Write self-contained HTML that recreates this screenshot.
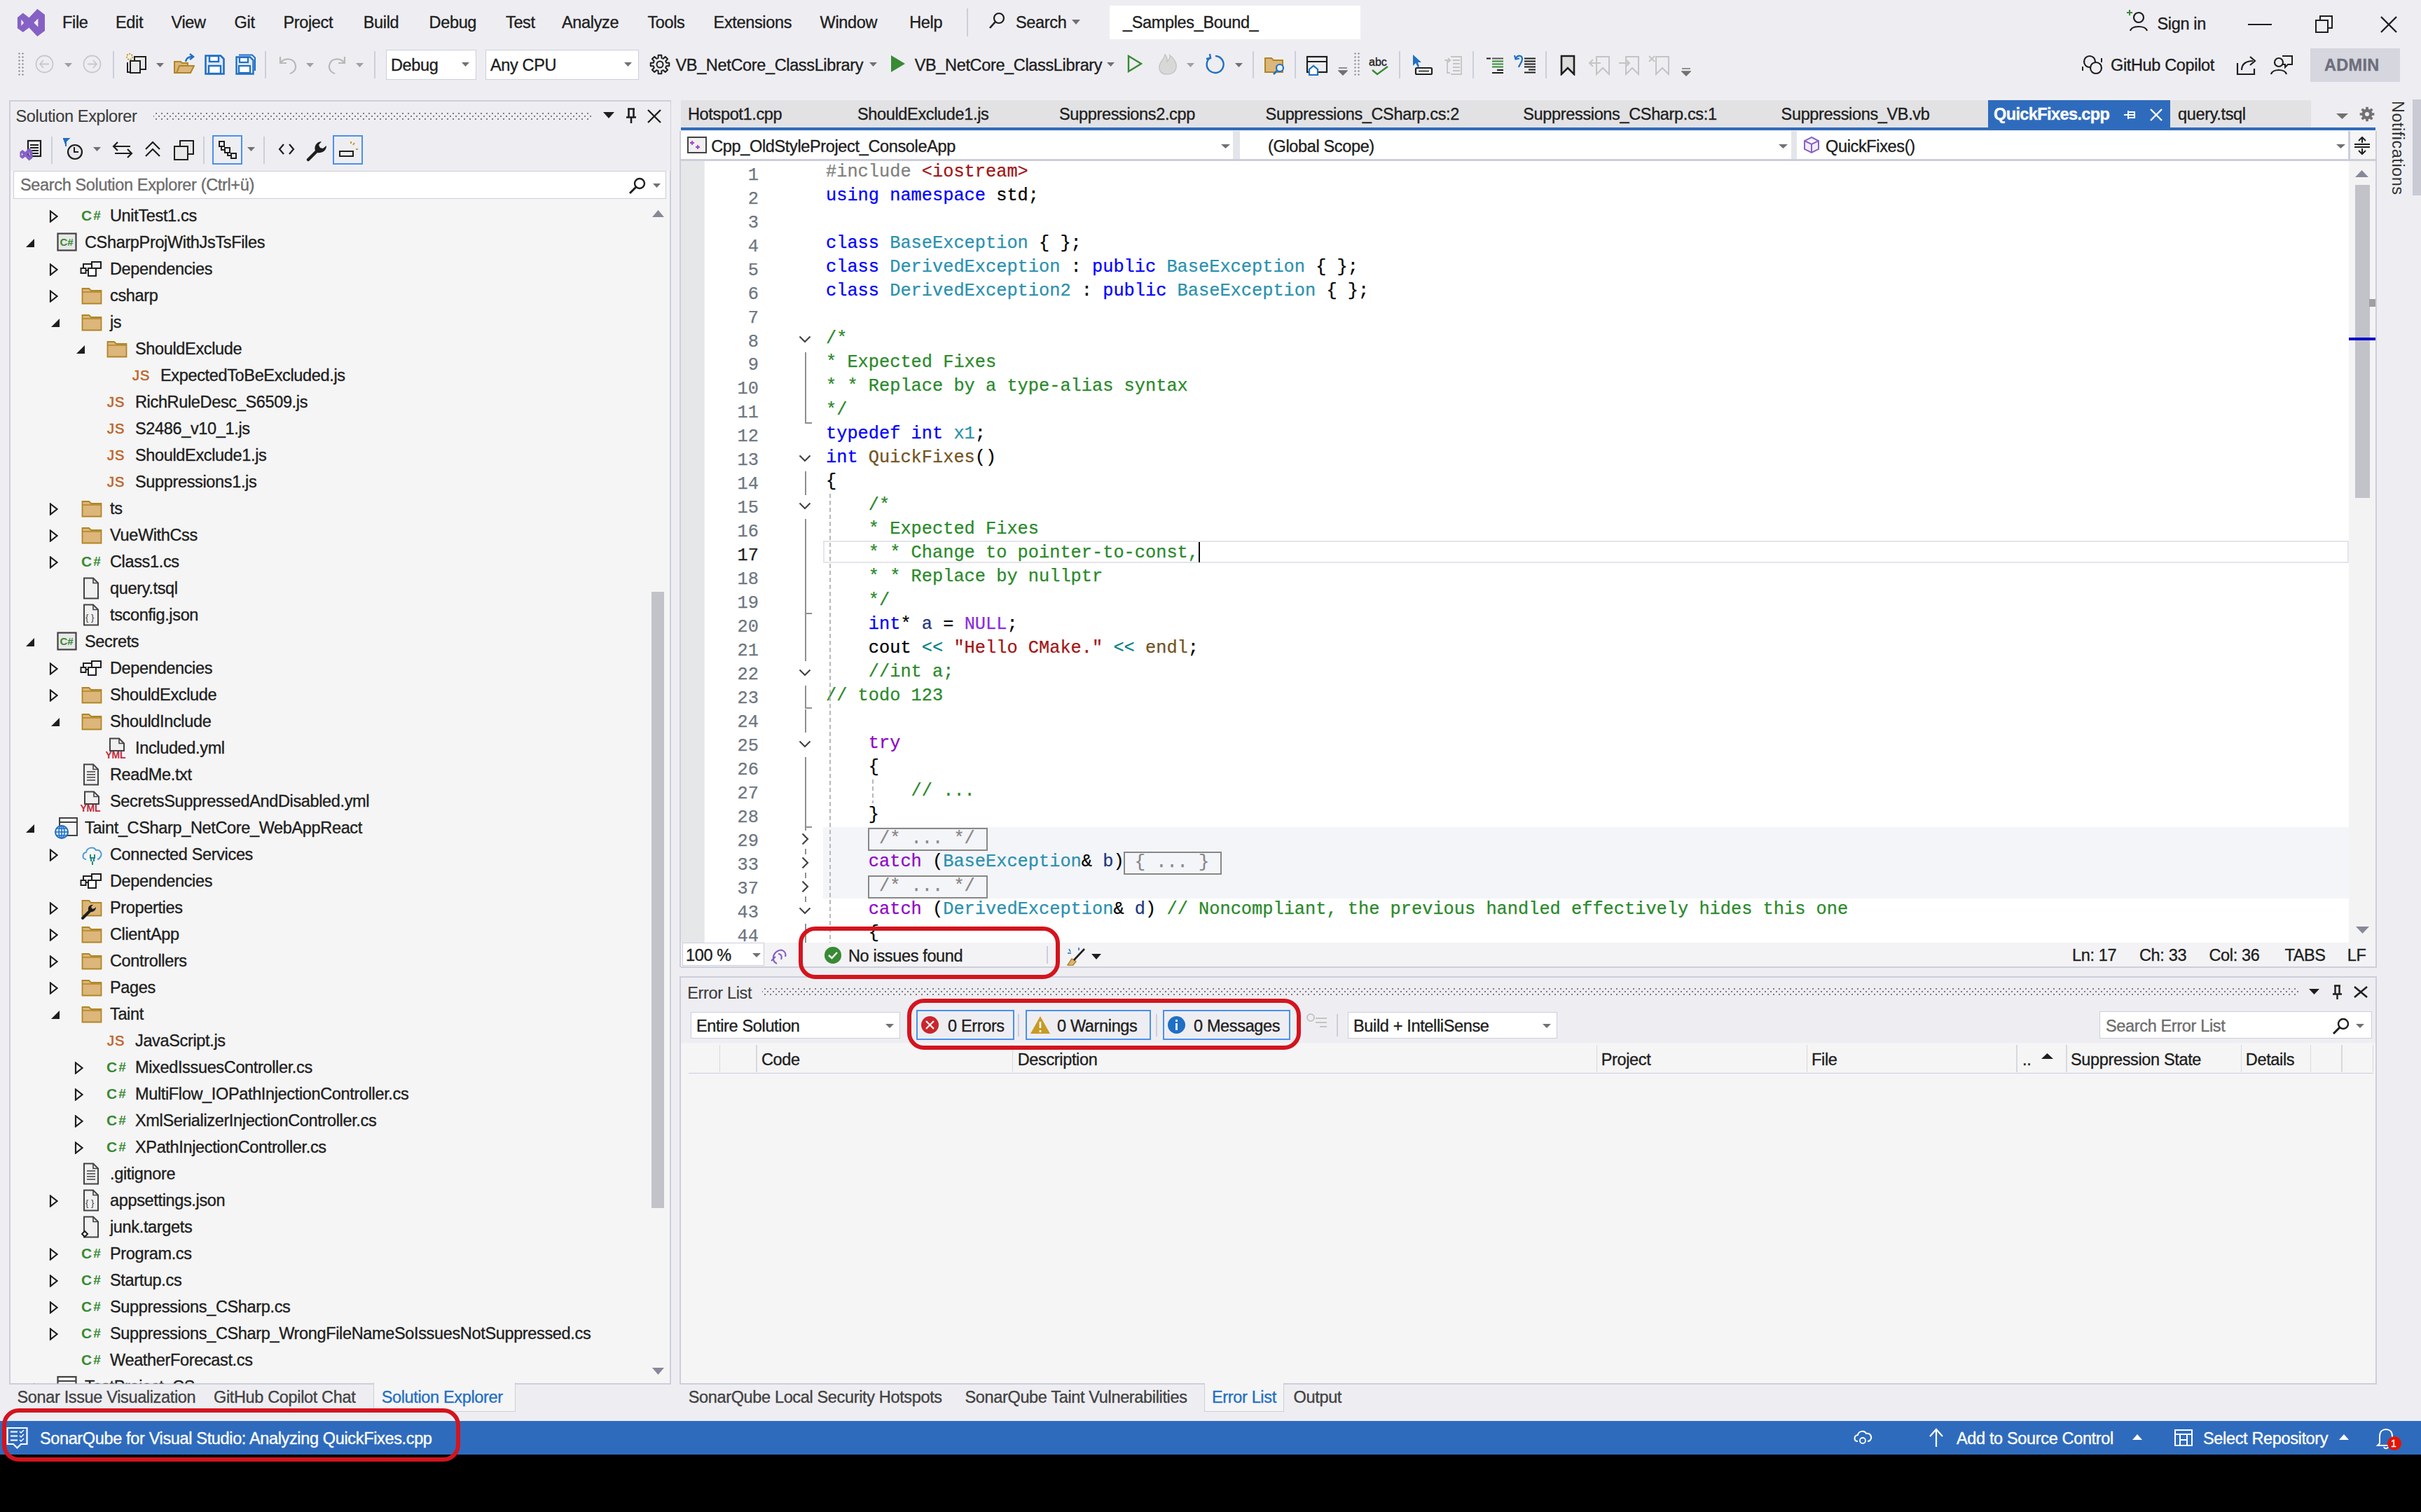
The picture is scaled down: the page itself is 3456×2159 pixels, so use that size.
<!DOCTYPE html><html><head><meta charset="utf-8"><style>
html,body{margin:0;padding:0}
body{width:3456px;height:2159px;overflow:hidden;position:relative;background:#EEEEF2;font-family:"Liberation Sans", sans-serif}
.t{position:absolute;white-space:pre;-webkit-text-stroke-width:0.35px}
.b{position:absolute}
.code{position:absolute;font-family:"Liberation Mono", monospace;font-size:25.33px;line-height:25.33px;white-space:pre;-webkit-text-stroke-width:0.25px}
</style></head><body>
<svg class="b" style="left:24px;top:12px;" width="41" height="41" viewBox="0 0 41 41"><path fill="#8661C5" fill-rule="evenodd" d="M29.3 0.8 L40 9 L40 31.9 L29.3 40.1 L17.5 27.6 L8.8 34 L0.9 28.3 L0.9 12.9 L8.8 6.5 L17.5 13.3 Z M6.3 15.8 L10.2 20.4 L6.3 25.1 Z M30.4 14.4 L24.3 20.6 L30.4 26.5 Z"/></svg>
<div class="t" style="left:89px;top:21.3px;font-size:23.5px;line-height:23.5px;color:#1E1E1E;letter-spacing:-0.35px;font-weight:400;">File</div>
<div class="t" style="left:165px;top:21.3px;font-size:23.5px;line-height:23.5px;color:#1E1E1E;letter-spacing:-0.35px;font-weight:400;">Edit</div>
<div class="t" style="left:244.5px;top:21.3px;font-size:23.5px;line-height:23.5px;color:#1E1E1E;letter-spacing:-0.35px;font-weight:400;">View</div>
<div class="t" style="left:334.6px;top:21.3px;font-size:23.5px;line-height:23.5px;color:#1E1E1E;letter-spacing:-0.35px;font-weight:400;">Git</div>
<div class="t" style="left:404.4px;top:21.3px;font-size:23.5px;line-height:23.5px;color:#1E1E1E;letter-spacing:-0.35px;font-weight:400;">Project</div>
<div class="t" style="left:518.8px;top:21.3px;font-size:23.5px;line-height:23.5px;color:#1E1E1E;letter-spacing:-0.35px;font-weight:400;">Build</div>
<div class="t" style="left:612.6px;top:21.3px;font-size:23.5px;line-height:23.5px;color:#1E1E1E;letter-spacing:-0.35px;font-weight:400;">Debug</div>
<div class="t" style="left:722px;top:21.3px;font-size:23.5px;line-height:23.5px;color:#1E1E1E;letter-spacing:-0.35px;font-weight:400;">Test</div>
<div class="t" style="left:802px;top:21.3px;font-size:23.5px;line-height:23.5px;color:#1E1E1E;letter-spacing:-0.35px;font-weight:400;">Analyze</div>
<div class="t" style="left:924.4px;top:21.3px;font-size:23.5px;line-height:23.5px;color:#1E1E1E;letter-spacing:-0.35px;font-weight:400;">Tools</div>
<div class="t" style="left:1018.6px;top:21.3px;font-size:23.5px;line-height:23.5px;color:#1E1E1E;letter-spacing:-0.35px;font-weight:400;">Extensions</div>
<div class="t" style="left:1170.6px;top:21.3px;font-size:23.5px;line-height:23.5px;color:#1E1E1E;letter-spacing:-0.35px;font-weight:400;">Window</div>
<div class="t" style="left:1298.2px;top:21.3px;font-size:23.5px;line-height:23.5px;color:#1E1E1E;letter-spacing:-0.35px;font-weight:400;">Help</div>
<div class="b" style="left:1380px;top:12px;width:2px;height:40px;background:#CCCEDB;"></div>
<svg class="b" style="left:1411px;top:16px;" width="26" height="28" viewBox="0 0 26 28"><circle cx="15" cy="10" r="7" fill="none" stroke="#1E1E1E" stroke-width="2.2"/><line x1="10" y1="15" x2="2" y2="24" stroke="#1E1E1E" stroke-width="2.6"/></svg>
<div class="t" style="left:1450px;top:21.3px;font-size:23.5px;line-height:23.5px;color:#1E1E1E;letter-spacing:-0.35px;font-weight:400;">Search</div>
<svg class="b" style="left:1530px;top:28px;" width="12" height="8" viewBox="0 0 12 8"><path d="M0 0 H12 L6 7Z" fill="#717171"/></svg>
<div class="b" style="left:1584px;top:8px;width:358px;height:48px;background:#FFFFFF;"></div>
<div class="t" style="left:1603px;top:21.3px;font-size:23.5px;line-height:23.5px;color:#1E1E1E;letter-spacing:-0.35px;font-weight:400;">_Samples_Bound_</div>
<svg class="b" style="left:3036px;top:12px;" width="36" height="36" viewBox="0 0 36 36"><circle cx="17" cy="13" r="7" fill="none" stroke="#1E1E1E" stroke-width="2.2"/><path d="M5 32 C7 24 27 24 29 32" fill="none" stroke="#1E1E1E" stroke-width="2.2"/><path d="M4 2 V10 M0 6 H8" stroke="#388A34" stroke-width="2"/></svg>
<div class="t" style="left:3079.5px;top:23.3px;font-size:23.5px;line-height:23.5px;color:#1E1E1E;letter-spacing:-0.35px;font-weight:400;">Sign in</div>
<div class="b" style="left:3209px;top:34px;width:34px;height:2px;background:#1E1E1E;"></div>
<svg class="b" style="left:3305px;top:22px;" width="26" height="26" viewBox="0 0 26 26"><rect x="1" y="7" width="17" height="17" fill="none" stroke="#1E1E1E" stroke-width="2"/><path d="M7 7 V1 H24 V18 H18" fill="none" stroke="#1E1E1E" stroke-width="2"/></svg>
<svg class="b" style="left:3397px;top:22px;" width="26" height="26" viewBox="0 0 26 26"><path d="M2 2 L24 24 M24 2 L2 24" stroke="#1E1E1E" stroke-width="2.4"/></svg>
<div class="b" style="left:25px;top:74px;width:10px;height:36px;background-image:radial-gradient(circle,#999 1px,transparent 1.3px);background-size:5px 5px"></div>
<svg class="b" style="left:50px;top:78px;" width="27" height="27" viewBox="0 0 27 27"><circle cx="13.5" cy="13.5" r="12" fill="none" stroke="#C8C8C8" stroke-width="1.8"/><path d="M20 13.5 H7 M12 8 L7 13.5 L12 19" fill="none" stroke="#C8C8C8" stroke-width="1.8"/></svg>
<svg class="b" style="left:92px;top:90px;" width="12" height="8" viewBox="0 0 12 8"><path d="M0 0 H11 L5.5 6Z" fill="#A0A0A0"/></svg>
<svg class="b" style="left:118px;top:78px;" width="27" height="27" viewBox="0 0 27 27"><circle cx="13.5" cy="13.5" r="12" fill="none" stroke="#C8C8C8" stroke-width="1.8"/><path d="M7 13.5 H20 M15 8 L20 13.5 L15 19" fill="none" stroke="#C8C8C8" stroke-width="1.8"/></svg>
<div class="b" style="left:161px;top:73px;width:2px;height:39px;background:#CCCEDB;"></div>
<svg class="b" style="left:178px;top:75px;" width="34" height="34" viewBox="0 0 34 34"><rect x="14" y="6" width="16" height="18" fill="#E8E8E8" stroke="#1E1E1E" stroke-width="2"/><rect x="8" y="12" width="14" height="17" fill="#E8E8E8" stroke="#1E1E1E" stroke-width="2"/><path d="M4 14 V28 H8" fill="none" stroke="#1E1E1E" stroke-width="2"/><circle cx="7" cy="6" r="4" fill="none" stroke="#C29A2A" stroke-width="2" stroke-dasharray="2 1.5"/></svg>
<svg class="b" style="left:223px;top:90px;" width="12" height="8" viewBox="0 0 12 8"><path d="M0 0 H11 L5.5 6Z" fill="#717171"/></svg>
<svg class="b" style="left:248px;top:76px;" width="30" height="30" viewBox="0 0 30 30"><path d="M1 12 H10 L12 14 H20 V28 H1Z" fill="#DCB67A" stroke="#B08526" stroke-width="2"/><path d="M4 28 L8 18 H29 L24 28Z" fill="#DCB67A" stroke="#B08526" stroke-width="2"/><path d="M17 12 C18 7 22 5 26 5" fill="none" stroke="#1F6FC5" stroke-width="2.5"/><path d="M23 1 L28 5 L23 9" fill="none" stroke="#1F6FC5" stroke-width="2.5"/></svg>
<svg class="b" style="left:292px;top:78px;" width="29" height="29" viewBox="0 0 29 29"><path d="M1.5 1.5 H23 L27.5 6 V27.5 H1.5Z" fill="#E1EAF4" stroke="#1F6FC5" stroke-width="2.6"/><rect x="7" y="2" width="13" height="8" fill="#fff" stroke="#1F6FC5" stroke-width="2.4"/><rect x="6" y="16" width="17" height="11" fill="#fff" stroke="#1F6FC5" stroke-width="2.4"/></svg>
<svg class="b" style="left:336px;top:77px;" width="29" height="30" viewBox="0 0 29 30"><path d="M1.5 4.5 H21 L25.5 9 V28.5 H1.5Z" fill="#E1EAF4" stroke="#1F6FC5" stroke-width="2.4"/><rect x="6" y="5" width="12" height="7" fill="#fff" stroke="#1F6FC5" stroke-width="2.2"/><rect x="5" y="17" width="16" height="10" fill="#fff" stroke="#1F6FC5" stroke-width="2.2"/><path d="M5 1.5 H24 L28 5.5 V24" fill="none" stroke="#1F6FC5" stroke-width="2"/></svg>
<div class="b" style="left:378px;top:73px;width:2px;height:39px;background:#CCCEDB;"></div>
<svg class="b" style="left:396px;top:78px;" width="30" height="28" viewBox="0 0 30 28"><path d="M4 3 V12 H13" fill="none" stroke="#B8B8B8" stroke-width="2.2"/><path d="M4 12 C10 4 24 4 26 16 C27 22 22 26 18 27" fill="none" stroke="#B8B8B8" stroke-width="2.2"/></svg>
<svg class="b" style="left:437px;top:90px;" width="12" height="8" viewBox="0 0 12 8"><path d="M0 0 H11 L5.5 6Z" fill="#A0A0A0"/></svg>
<svg class="b" style="left:466px;top:78px;" width="30" height="28" viewBox="0 0 30 28"><path d="M26 3 V12 H17" fill="none" stroke="#B8B8B8" stroke-width="2.2"/><path d="M26 12 C20 4 6 4 4 16 C3 22 8 26 12 27" fill="none" stroke="#B8B8B8" stroke-width="2.2"/></svg>
<svg class="b" style="left:508px;top:90px;" width="12" height="8" viewBox="0 0 12 8"><path d="M0 0 H11 L5.5 6Z" fill="#A0A0A0"/></svg>
<div class="b" style="left:534px;top:73px;width:2px;height:39px;background:#CCCEDB;"></div>
<div class="b" style="left:551px;top:71px;width:129px;height:43px;background:#FFFFFF;border:1.5px solid #CCCEDB;box-sizing:border-box;"></div>
<div class="t" style="left:558px;top:82.3px;font-size:23.5px;line-height:23.5px;color:#1E1E1E;letter-spacing:-0.35px;font-weight:400;">Debug</div>
<svg class="b" style="left:659px;top:89px;" width="12" height="8" viewBox="0 0 12 8"><path d="M0 0 H11 L5.5 6Z" fill="#717171"/></svg>
<div class="b" style="left:693px;top:71px;width:219px;height:43px;background:#FFFFFF;border:1.5px solid #CCCEDB;box-sizing:border-box;"></div>
<div class="t" style="left:700px;top:82.3px;font-size:23.5px;line-height:23.5px;color:#1E1E1E;letter-spacing:-0.35px;font-weight:400;">Any CPU</div>
<svg class="b" style="left:891px;top:89px;" width="12" height="8" viewBox="0 0 12 8"><path d="M0 0 H11 L5.5 6Z" fill="#717171"/></svg>
<svg class="b" style="left:927px;top:77px;" width="30" height="30" viewBox="0 0 30 30"><path d="M24.20 12.63 L28.29 12.63 L28.29 17.37 L24.20 17.37 L23.18 19.83 L26.08 22.72 L22.72 26.08 L19.83 23.18 L17.37 24.20 L17.37 28.29 L12.63 28.29 L12.63 24.20 L10.17 23.18 L7.28 26.08 L3.92 22.72 L6.82 19.83 L5.80 17.37 L1.71 17.37 L1.71 12.63 L5.80 12.63 L6.82 10.17 L3.92 7.28 L7.28 3.92 L10.17 6.82 L12.63 5.80 L12.63 1.71 L17.37 1.71 L17.37 5.80 L19.83 6.82 L22.72 3.92 L26.08 7.28 L23.18 10.17Z" fill="none" stroke="#1E1E1E" stroke-width="2" stroke-linejoin="round"/><circle cx="15" cy="15" r="4.5" fill="none" stroke="#1E1E1E" stroke-width="2"/></svg>
<div class="t" style="left:964.5px;top:82.3px;font-size:23.5px;line-height:23.5px;color:#1E1E1E;letter-spacing:-0.35px;font-weight:400;">VB_NetCore_ClassLibrary</div>
<svg class="b" style="left:1241px;top:89px;" width="12" height="8" viewBox="0 0 12 8"><path d="M0 0 H11 L5.5 6Z" fill="#717171"/></svg>
<svg class="b" style="left:1271px;top:78px;" width="22" height="26" viewBox="0 0 22 26"><path d="M1 1 L21 13 L1 25Z" fill="#388A34"/></svg>
<div class="t" style="left:1305.7px;top:82.3px;font-size:23.5px;line-height:23.5px;color:#1E1E1E;letter-spacing:-0.35px;font-weight:400;">VB_NetCore_ClassLibrary</div>
<svg class="b" style="left:1580px;top:89px;" width="12" height="8" viewBox="0 0 12 8"><path d="M0 0 H11 L5.5 6Z" fill="#717171"/></svg>
<svg class="b" style="left:1609px;top:78px;" width="22" height="26" viewBox="0 0 22 26"><path d="M2 2 L20 13 L2 24Z" fill="none" stroke="#388A34" stroke-width="2.4"/></svg>
<svg class="b" style="left:1652px;top:76px;" width="30" height="31" viewBox="0 0 30 31"><path d="M13 30 C4 30 1 22 4 15 C6 10 10 8 11 2 C15 6 14 10 14 12 C17 9 19 6 18 3 C26 9 29 17 26 24 C24 28 19 30 13 30Z" fill="#D8D8D8" stroke="#C4C4C4" stroke-width="1.5"/></svg>
<svg class="b" style="left:1694px;top:90px;" width="12" height="8" viewBox="0 0 12 8"><path d="M0 0 H11 L5.5 6Z" fill="#A0A0A0"/></svg>
<svg class="b" style="left:1719px;top:76px;" width="32" height="32" viewBox="0 0 32 32"><path d="M9 6 A12 12 0 1 0 16 4" fill="none" stroke="#1F6FC5" stroke-width="2.4"/><path d="M8 1 L9 7 L3 8" fill="none" stroke="#1F6FC5" stroke-width="2.4"/></svg>
<svg class="b" style="left:1763px;top:90px;" width="12" height="8" viewBox="0 0 12 8"><path d="M0 0 H11 L5.5 6Z" fill="#717171"/></svg>
<div class="b" style="left:1788px;top:73px;width:2px;height:39px;background:#CCCEDB;"></div>
<svg class="b" style="left:1805px;top:79px;" width="32" height="28" viewBox="0 0 32 28"><path d="M1 4 H10 L13 7 H26 V24 H1Z" fill="#DCB67A" stroke="#B08526" stroke-width="2"/><circle cx="22" cy="18" r="5" fill="#E8EEF5" stroke="#1F6FC5" stroke-width="2.2"/><path d="M18 22 L13 27" stroke="#1F6FC5" stroke-width="2.6"/></svg>
<div class="b" style="left:1848px;top:73px;width:2px;height:39px;background:#CCCEDB;"></div>
<svg class="b" style="left:1864px;top:79px;" width="32" height="30" viewBox="0 0 32 30"><rect x="2" y="2" width="28" height="22" fill="none" stroke="#1E1E1E" stroke-width="2.2"/><path d="M2 9 H30" stroke="#1E1E1E" stroke-width="2"/><path d="M5 28 V20 L11 15 L17 20 V28Z" fill="#fff" stroke="#1F6FC5" stroke-width="2.2"/></svg>
<svg class="b" style="left:1910px;top:95px;" width="14" height="14" viewBox="0 0 14 14"><path d="M1 2 H13 M1 6 L7 12 L13 6Z" fill="#717171" stroke="#717171" stroke-width="1.5"/></svg>
<div class="b" style="left:1932px;top:74px;width:10px;height:36px;background-image:radial-gradient(circle,#999 1px,transparent 1.3px);background-size:5px 5px"></div>
<div class="t" style="left:1954px;top:80.7px;font-size:16px;line-height:16px;color:#1E1E1E;letter-spacing:0px;font-weight:400;">abc</div>
<svg class="b" style="left:1957px;top:94px;" width="26" height="14" viewBox="0 0 26 14"><path d="M2 6 L9 12 L24 1" fill="none" stroke="#388A34" stroke-width="2.4"/></svg>
<div class="b" style="left:1997px;top:73px;width:2px;height:39px;background:#CCCEDB;"></div>
<svg class="b" style="left:2014px;top:76px;" width="32" height="32" viewBox="0 0 32 32"><path d="M3 2 L3 18 L7 14 L10 20 L12 19 L10 13 L15 13Z" fill="#1F6FC5"/><rect x="7" y="21" width="23" height="9" rx="1.5" fill="#fff" stroke="#1E1E1E" stroke-width="2.2"/><path d="M11 25.5 H26" stroke="#1E1E1E" stroke-width="1.6"/></svg>
<svg class="b" style="left:2058px;top:78px;" width="30" height="30" viewBox="0 0 30 30"><path d="M13 3 H28 V28 H13 M16 8 H26 M16 13 H26 M16 18 H26 M16 23 H26 M8 8 V26 H12 M4 8 H12 L9 5 M12 8 L9 11" fill="none" stroke="#C4C4C4" stroke-width="1.8"/></svg>
<div class="b" style="left:2102px;top:73px;width:2px;height:39px;background:#CCCEDB;"></div>
<svg class="b" style="left:2122px;top:79px;" width="26" height="28" viewBox="0 0 26 28"><path d="M0 4.5 H6 M15 21 H24 M8 25 H24" stroke="#1E1E1E" stroke-width="2"/><path d="M8 8.5 H24 M8 12.5 H24 M8 16.5 H24" stroke="#388A34" stroke-width="2"/><path d="M8 4.5 H24" stroke="#555" stroke-width="2"/></svg>
<svg class="b" style="left:2161px;top:77px;" width="32" height="30" viewBox="0 0 32 30"><path d="M15 6.5 H31 M15 10.5 H31 M15 14.5 H31 M15 18.5 H31 M21 22.5 H31 M15 26.5 H31" stroke="#1E1E1E" stroke-width="2"/><path d="M3 6 C6 1 12 2 12 7 C12 12 8 15 7 19" fill="none" stroke="#1F6FC5" stroke-width="2.2"/><path d="M1 2 L2.5 7.5 L8 6.5" fill="none" stroke="#1F6FC5" stroke-width="2.2"/></svg>
<div class="b" style="left:2206px;top:73px;width:2px;height:39px;background:#CCCEDB;"></div>
<svg class="b" style="left:2227px;top:78px;" width="22" height="30" viewBox="0 0 22 30"><path d="M2 2 H20 V28 L11 19 L2 28Z" fill="#DCDCDC" stroke="#1E1E1E" stroke-width="2.6"/></svg>
<svg class="b" style="left:2267px;top:78px;" width="34" height="30" viewBox="0 0 34 30"><path d="M12 3 H30 V28 L21 19 L12 28 Z M2 12 H18 M7 7 L2 12 L7 17" fill="none" stroke="#C4C4C4" stroke-width="2"/></svg>
<svg class="b" style="left:2309px;top:78px;" width="34" height="30" viewBox="0 0 34 30"><path d="M12 3 H30 V28 L21 19 L12 28 Z M2 12 H17 M13 8 L17 12 L13 16" fill="none" stroke="#C4C4C4" stroke-width="2"/></svg>
<svg class="b" style="left:2352px;top:78px;" width="34" height="30" viewBox="0 0 34 30"><path d="M12 3 H30 V28 L21 19 L12 28 Z M2 2 L10 10 M10 2 L2 10" fill="none" stroke="#C4C4C4" stroke-width="2"/></svg>
<svg class="b" style="left:2400px;top:96px;" width="14" height="14" viewBox="0 0 14 14"><path d="M1 2 H13 M1 6 L7 12 L13 6Z" fill="#717171" stroke="#717171" stroke-width="1.5"/></svg>
<svg class="b" style="left:2970px;top:77px;" width="34" height="32" viewBox="0 0 34 32"><circle cx="13" cy="11" r="8" fill="none" stroke="#1E1E1E" stroke-width="2.2"/><circle cx="22" cy="20" r="8" fill="#EEEEF2" stroke="#1E1E1E" stroke-width="2.2"/><path d="M3 24 V18 M30 12 V6" stroke="#1E1E1E" stroke-width="2"/></svg>
<div class="t" style="left:3013px;top:82.3px;font-size:23.5px;line-height:23.5px;color:#1E1E1E;letter-spacing:-0.35px;font-weight:400;">GitHub Copilot</div>
<svg class="b" style="left:3192px;top:78px;" width="32" height="30" viewBox="0 0 32 30"><path d="M2 12 V28 H26 V20" fill="none" stroke="#1E1E1E" stroke-width="2.2"/><path d="M8 22 C8 12 16 9 24 9 M20 3 L27 9 L20 15" fill="none" stroke="#1E1E1E" stroke-width="2.2"/></svg>
<svg class="b" style="left:3240px;top:78px;" width="34" height="30" viewBox="0 0 34 30"><circle cx="13" cy="11" r="6" fill="none" stroke="#1E1E1E" stroke-width="2.2"/><path d="M2 28 C4 20 22 20 24 28" fill="none" stroke="#1E1E1E" stroke-width="2.2"/><path d="M18 2 H32 V14 H26 L22 18 V14 H18" fill="none" stroke="#1E1E1E" stroke-width="2"/></svg>
<div class="b" style="left:3298px;top:69px;width:128px;height:48px;background:#D5D6DE;"></div>
<div class="t" style="left:3318px;top:82.3px;font-size:23.5px;line-height:23.5px;color:#6D6E7C;letter-spacing:0.3px;font-weight:700;">ADMIN</div>
<div class="b" style="left:12.5px;top:143px;width:945.8px;height:1833.6px;background:#F5F5F5;border:2px solid #CCCEDB;box-sizing:border-box;"></div>
<div class="b" style="left:14.5px;top:144.5px;width:942.0px;height:99.5px;background:#EEEEF2;"></div>
<div class="t" style="left:22.5px;top:155.3px;font-size:23.5px;line-height:23.5px;color:#3C3C3C;letter-spacing:-0.35px;font-weight:400;-webkit-text-stroke-width:0.15px;">Solution Explorer</div>
<div class="b" style="left:219px;top:159.5px;width:626px;height:12px;background-image:radial-gradient(circle,#7A7A80 0.9px,transparent 1.3px),radial-gradient(circle,#7A7A80 0.9px,transparent 1.3px);background-size:8px 8px,8px 8px;background-position:0 -2px,4px 2px"></div>
<svg class="b" style="left:861px;top:160px;" width="16" height="10" viewBox="0 0 16 10"><path d="M0 0 H16 L8 9Z" fill="#1E1E1E"/></svg>
<svg class="b" style="left:893px;top:154px;" width="16" height="23" viewBox="0 0 16 23"><path d="M3 1.5 H13 M4.5 1.5 V13 M11.5 1.5 V13 M1 13.5 H15 M8 13.5 V22" fill="none" stroke="#1E1E1E" stroke-width="2.6"/></svg>
<svg class="b" style="left:923px;top:155px;" width="22" height="22" viewBox="0 0 22 22"><path d="M2 2 L20 20 M20 2 L2 20" stroke="#1E1E1E" stroke-width="2.4"/></svg>
<svg class="b" style="left:28px;top:199px;" width="32" height="32" viewBox="0 0 32 32"><rect x="12" y="2" width="18" height="22" fill="none" stroke="#1E1E1E" stroke-width="2.2"/><path d="M15 8 H27 M15 12 H27 M15 16 H27 M15 20 H27" stroke="#1E1E1E" stroke-width="2"/><path transform="translate(0,12) scale(0.46)" fill="#8661C5" fill-rule="evenodd" d="M29.3 0.8 L40 9 L40 31.9 L29.3 40.1 L17.5 27.6 L8.8 34 L0.9 28.3 L0.9 12.9 L8.8 6.5 L17.5 13.3 Z M6.3 15.8 L10.2 20.4 L6.3 25.1 Z M30.4 14.4 L24.3 20.6 L30.4 26.5 Z"/></svg>
<div class="b" style="left:72.5px;top:195px;width:2.0px;height:39px;background:#CCCEDB;"></div>
<svg class="b" style="left:89px;top:197px;" width="34" height="34" viewBox="0 0 34 34"><path d="M1 1 H9 L5 5 V12" fill="#1F6FC5" stroke="#1F6FC5" stroke-width="2"/><circle cx="18" cy="20" r="10" fill="#E8E8E8" stroke="#1E1E1E" stroke-width="2.2"/><path d="M17 13 V20 H23" fill="none" stroke="#1E1E1E" stroke-width="2"/></svg>
<svg class="b" style="left:133px;top:210px;" width="12" height="8" viewBox="0 0 12 8"><path d="M0 0 H11 L5.5 6Z" fill="#717171"/></svg>
<svg class="b" style="left:160px;top:201px;" width="30" height="26" viewBox="0 0 30 26"><path d="M2 8 H26 M8 2 L2 8 L8 14 M28 18 H4 M22 12 L28 18 L22 24" fill="none" stroke="#1E1E1E" stroke-width="2.2"/></svg>
<svg class="b" style="left:205px;top:199px;" width="26" height="28" viewBox="0 0 26 28"><path d="M3 14 L13 4 L23 14 M3 24 L13 14 L23 24" fill="none" stroke="#1E1E1E" stroke-width="2.2"/></svg>
<svg class="b" style="left:247px;top:199px;" width="32" height="32" viewBox="0 0 32 32"><rect x="10" y="2" width="19" height="19" fill="#E8E8E8" stroke="#1E1E1E" stroke-width="2"/><rect x="2" y="10" width="19" height="19" fill="#E8E8E8" stroke="#1E1E1E" stroke-width="2"/></svg>
<div class="b" style="left:290px;top:195px;width:2px;height:39px;background:#CCCEDB;"></div>
<div class="b" style="left:302.8px;top:193px;width:43.19999999999999px;height:42.400000000000006px;background:none;border:2px solid #4A90F0;box-sizing:border-box;"></div>
<svg class="b" style="left:311px;top:200px;" width="28" height="28" viewBox="0 0 28 28"><rect x="2" y="2" width="7" height="7" fill="none" stroke="#1E1E1E" stroke-width="2"/><rect x="10" y="11" width="7" height="7" fill="none" stroke="#1E1E1E" stroke-width="2"/><rect x="19" y="19" width="7" height="7" fill="none" stroke="#1E1E1E" stroke-width="2"/><path d="M5 9 V14 H10 M14 18 V22 H19" fill="none" stroke="#1E1E1E" stroke-width="2"/></svg>
<svg class="b" style="left:353px;top:210px;" width="12" height="8" viewBox="0 0 12 8"><path d="M0 0 H11 L5.5 6Z" fill="#717171"/></svg>
<div class="b" style="left:376px;top:195px;width:2px;height:39px;background:#CCCEDB;"></div>
<svg class="b" style="left:397px;top:204px;" width="24" height="18" viewBox="0 0 24 18"><path d="M8 2 L2 9 L8 16 M16 2 L22 9 L16 16" fill="none" stroke="#1E1E1E" stroke-width="2.2"/></svg>
<svg class="b" style="left:437px;top:199px;" width="32" height="32" viewBox="0 0 32 32"><path d="M3 29 L15 17" stroke="#1E1E1E" stroke-width="4.5" stroke-linecap="round"/><path d="M14 18 C10 12 14 3 22 3 L18 8 L20 12 L24 13 L29 9 C29 17 22 20 16 19Z" fill="#1E1E1E"/></svg>
<div class="b" style="left:475px;top:193px;width:42.60000000000002px;height:42.400000000000006px;background:none;border:2px solid #4A90F0;box-sizing:border-box;"></div>
<svg class="b" style="left:482px;top:201px;" width="30" height="26" viewBox="0 0 30 26"><path d="M3 15 V22 H22 V15 Z" fill="none" stroke="#1E1E1E" stroke-width="2"/><path d="M3 15 H17" stroke="#1E1E1E" stroke-width="2"/><path d="M22 6 L24 3 M26 12 H29 M19 4 L19 1" stroke="#C29A2A" stroke-width="2"/></svg>
<div class="b" style="left:19.4px;top:243.7px;width:931.6px;height:40.30000000000001px;background:#FFFFFF;border:1.5px solid #CCCEDB;box-sizing:border-box;"></div>
<div class="t" style="left:29px;top:253.3px;font-size:23.5px;line-height:23.5px;color:#6D6D6D;letter-spacing:-0.35px;font-weight:400;">Search Solution Explorer (Ctrl+ü)</div>
<svg class="b" style="left:897px;top:252px;" width="26" height="26" viewBox="0 0 26 26"><circle cx="16" cy="10" r="7" fill="none" stroke="#1E1E1E" stroke-width="2.4"/><path d="M11 15 L2 24" stroke="#1E1E1E" stroke-width="3"/></svg>
<svg class="b" style="left:932px;top:262px;" width="12" height="8" viewBox="0 0 12 8"><path d="M0 0 H11 L5.5 6Z" fill="#717171"/></svg>
<div class="b" style="left:0;top:0;width:3456px;height:2159px;clip-path:polygon(14.5px 284px,930px 284px,930px 1975.5px,14.5px 1975.5px)">
<svg class="b" style="left:70.4px;top:300px;" width="14" height="18" viewBox="0 0 14 18"><path d="M2 1.5 L11.5 9 L2 16.5Z" fill="none" stroke="#1E1E1E" stroke-width="2.2"/></svg>
<div class="t" style="left:116px;top:297px;font-size:21px;line-height:22px;color:#388A34;font-weight:700;letter-spacing:0px;-webkit-text-stroke-width:0">C<span style="font-size:19px;position:relative;top:-1px;margin-left:2px">#</span></div>
<div class="t" style="left:157px;top:297.3px;font-size:23.5px;line-height:23.5px;color:#1E1E1E;letter-spacing:-0.35px;font-weight:400;">UnitTest1.cs</div>
<svg class="b" style="left:35.5px;top:340px;" width="14" height="14" viewBox="0 0 14 14"><path d="M13 1 V13 H1Z" fill="#1E1E1E"/></svg>
<svg class="b" style="left:80.5px;top:332px;" width="30" height="28" viewBox="0 0 30 28"><rect x="1.5" y="1.5" width="26" height="24" fill="#E8E8E8" stroke="#424242" stroke-width="2.2"/></svg>
<div class="t" style="left:85.5px;top:337px;font-size:15px;line-height:18px;color:#388A34;letter-spacing:0px;font-weight:700;-webkit-text-stroke-width:0">C#</div>
<div class="t" style="left:121px;top:335.3px;font-size:23.5px;line-height:23.5px;color:#1E1E1E;letter-spacing:-0.35px;font-weight:400;">CSharpProjWithJsTsFiles</div>
<svg class="b" style="left:70.4px;top:376px;" width="14" height="18" viewBox="0 0 14 18"><path d="M2 1.5 L11.5 9 L2 16.5Z" fill="none" stroke="#1E1E1E" stroke-width="2.2"/></svg>
<svg class="b" style="left:114px;top:372px;" width="34" height="24" viewBox="0 0 34 24"><rect x="1.5" y="11" width="7" height="7" fill="none" stroke="#1E1E1E" stroke-width="2"/><rect x="17" y="2" width="13" height="9" fill="none" stroke="#1E1E1E" stroke-width="2"/><rect x="12" y="11" width="11" height="11" fill="#fff" stroke="#1E1E1E" stroke-width="2"/><path d="M8 14 H12 M5 11 V5 H17" fill="none" stroke="#1E1E1E" stroke-width="2"/></svg>
<div class="t" style="left:157px;top:373.3px;font-size:23.5px;line-height:23.5px;color:#1E1E1E;letter-spacing:-0.35px;font-weight:400;">Dependencies</div>
<svg class="b" style="left:70.4px;top:414px;" width="14" height="18" viewBox="0 0 14 18"><path d="M2 1.5 L11.5 9 L2 16.5Z" fill="none" stroke="#1E1E1E" stroke-width="2.2"/></svg>
<svg class="b" style="left:116px;top:409px;" width="30" height="26" viewBox="0 0 30 26"><path d="M1.5 3 H11 L14 6 H28.5 V24.5 H1.5Z" fill="#DCB67A" stroke="#B08526" stroke-width="1.8"/><path d="M1.5 8 H28.5" stroke="#B08526" stroke-width="1.5"/></svg>
<div class="t" style="left:157px;top:411.3px;font-size:23.5px;line-height:23.5px;color:#1E1E1E;letter-spacing:-0.35px;font-weight:400;">csharp</div>
<svg class="b" style="left:71.5px;top:454px;" width="14" height="14" viewBox="0 0 14 14"><path d="M13 1 V13 H1Z" fill="#1E1E1E"/></svg>
<svg class="b" style="left:116px;top:447px;" width="30" height="26" viewBox="0 0 30 26"><path d="M1.5 3 H11 L14 6 H28.5 V24.5 H1.5Z" fill="#DCB67A" stroke="#B08526" stroke-width="1.8"/><path d="M1.5 8 H28.5" stroke="#B08526" stroke-width="1.5"/></svg>
<div class="t" style="left:157px;top:449.3px;font-size:23.5px;line-height:23.5px;color:#1E1E1E;letter-spacing:-0.35px;font-weight:400;">js</div>
<svg class="b" style="left:107.5px;top:492px;" width="14" height="14" viewBox="0 0 14 14"><path d="M13 1 V13 H1Z" fill="#1E1E1E"/></svg>
<svg class="b" style="left:152px;top:485px;" width="30" height="26" viewBox="0 0 30 26"><path d="M1.5 3 H11 L14 6 H28.5 V24.5 H1.5Z" fill="#DCB67A" stroke="#B08526" stroke-width="1.8"/><path d="M1.5 8 H28.5" stroke="#B08526" stroke-width="1.5"/></svg>
<div class="t" style="left:193px;top:487.3px;font-size:23.5px;line-height:23.5px;color:#1E1E1E;letter-spacing:-0.35px;font-weight:400;">ShouldExclude</div>
<div class="t" style="left:189px;top:526px;font-size:20px;line-height:20px;color:#C0652B;font-weight:400;letter-spacing:1px;-webkit-text-stroke-width:0.6px">JS</div>
<div class="t" style="left:229px;top:525.3px;font-size:23.5px;line-height:23.5px;color:#1E1E1E;letter-spacing:-0.35px;font-weight:400;">ExpectedToBeExcluded.js</div>
<div class="t" style="left:153px;top:564px;font-size:20px;line-height:20px;color:#C0652B;font-weight:400;letter-spacing:1px;-webkit-text-stroke-width:0.6px">JS</div>
<div class="t" style="left:193px;top:563.3px;font-size:23.5px;line-height:23.5px;color:#1E1E1E;letter-spacing:-0.35px;font-weight:400;">RichRuleDesc_S6509.js</div>
<div class="t" style="left:153px;top:602px;font-size:20px;line-height:20px;color:#C0652B;font-weight:400;letter-spacing:1px;-webkit-text-stroke-width:0.6px">JS</div>
<div class="t" style="left:193px;top:601.3px;font-size:23.5px;line-height:23.5px;color:#1E1E1E;letter-spacing:-0.35px;font-weight:400;">S2486_v10_1.js</div>
<div class="t" style="left:153px;top:640px;font-size:20px;line-height:20px;color:#C0652B;font-weight:400;letter-spacing:1px;-webkit-text-stroke-width:0.6px">JS</div>
<div class="t" style="left:193px;top:639.3px;font-size:23.5px;line-height:23.5px;color:#1E1E1E;letter-spacing:-0.35px;font-weight:400;">ShouldExclude1.js</div>
<div class="t" style="left:153px;top:678px;font-size:20px;line-height:20px;color:#C0652B;font-weight:400;letter-spacing:1px;-webkit-text-stroke-width:0.6px">JS</div>
<div class="t" style="left:193px;top:677.3px;font-size:23.5px;line-height:23.5px;color:#1E1E1E;letter-spacing:-0.35px;font-weight:400;">Suppressions1.js</div>
<svg class="b" style="left:70.4px;top:718px;" width="14" height="18" viewBox="0 0 14 18"><path d="M2 1.5 L11.5 9 L2 16.5Z" fill="none" stroke="#1E1E1E" stroke-width="2.2"/></svg>
<svg class="b" style="left:116px;top:713px;" width="30" height="26" viewBox="0 0 30 26"><path d="M1.5 3 H11 L14 6 H28.5 V24.5 H1.5Z" fill="#DCB67A" stroke="#B08526" stroke-width="1.8"/><path d="M1.5 8 H28.5" stroke="#B08526" stroke-width="1.5"/></svg>
<div class="t" style="left:157px;top:715.3px;font-size:23.5px;line-height:23.5px;color:#1E1E1E;letter-spacing:-0.35px;font-weight:400;">ts</div>
<svg class="b" style="left:70.4px;top:756px;" width="14" height="18" viewBox="0 0 14 18"><path d="M2 1.5 L11.5 9 L2 16.5Z" fill="none" stroke="#1E1E1E" stroke-width="2.2"/></svg>
<svg class="b" style="left:116px;top:751px;" width="30" height="26" viewBox="0 0 30 26"><path d="M1.5 3 H11 L14 6 H28.5 V24.5 H1.5Z" fill="#DCB67A" stroke="#B08526" stroke-width="1.8"/><path d="M1.5 8 H28.5" stroke="#B08526" stroke-width="1.5"/></svg>
<div class="t" style="left:157px;top:753.3px;font-size:23.5px;line-height:23.5px;color:#1E1E1E;letter-spacing:-0.35px;font-weight:400;">VueWithCss</div>
<svg class="b" style="left:70.4px;top:794px;" width="14" height="18" viewBox="0 0 14 18"><path d="M2 1.5 L11.5 9 L2 16.5Z" fill="none" stroke="#1E1E1E" stroke-width="2.2"/></svg>
<div class="t" style="left:116px;top:791px;font-size:21px;line-height:22px;color:#388A34;font-weight:700;letter-spacing:0px;-webkit-text-stroke-width:0">C<span style="font-size:19px;position:relative;top:-1px;margin-left:2px">#</span></div>
<div class="t" style="left:157px;top:791.3px;font-size:23.5px;line-height:23.5px;color:#1E1E1E;letter-spacing:-0.35px;font-weight:400;">Class1.cs</div>
<svg class="b" style="left:116px;top:824px;" width="28" height="32" viewBox="0 0 28 32"><path d="M4 1.5 H17 L24 8.5 V30.5 H4Z" fill="#F0F0F0" stroke="#424242" stroke-width="2"/><path d="M17 1.5 V8.5 H24" fill="none" stroke="#424242" stroke-width="1.6"/></svg>
<div class="t" style="left:157px;top:829.3px;font-size:23.5px;line-height:23.5px;color:#1E1E1E;letter-spacing:-0.35px;font-weight:400;">query.tsql</div>
<svg class="b" style="left:116px;top:862px;" width="28" height="32" viewBox="0 0 28 32"><path d="M4 1.5 H17 L24 8.5 V30.5 H4Z" fill="#F0F0F0" stroke="#424242" stroke-width="2"/><path d="M17 1.5 V8.5 H24" fill="none" stroke="#424242" stroke-width="1.6"/><text x="6" y="24" font-size="13" font-family="Liberation Sans" fill="#424242">{ }</text></svg>
<div class="t" style="left:157px;top:867.3px;font-size:23.5px;line-height:23.5px;color:#1E1E1E;letter-spacing:-0.35px;font-weight:400;">tsconfig.json</div>
<svg class="b" style="left:35.5px;top:910px;" width="14" height="14" viewBox="0 0 14 14"><path d="M13 1 V13 H1Z" fill="#1E1E1E"/></svg>
<svg class="b" style="left:80.5px;top:902px;" width="30" height="28" viewBox="0 0 30 28"><rect x="1.5" y="1.5" width="26" height="24" fill="#E8E8E8" stroke="#424242" stroke-width="2.2"/></svg>
<div class="t" style="left:85.5px;top:907px;font-size:15px;line-height:18px;color:#388A34;letter-spacing:0px;font-weight:700;-webkit-text-stroke-width:0">C#</div>
<div class="t" style="left:121px;top:905.3px;font-size:23.5px;line-height:23.5px;color:#1E1E1E;letter-spacing:-0.35px;font-weight:400;">Secrets</div>
<svg class="b" style="left:70.4px;top:946px;" width="14" height="18" viewBox="0 0 14 18"><path d="M2 1.5 L11.5 9 L2 16.5Z" fill="none" stroke="#1E1E1E" stroke-width="2.2"/></svg>
<svg class="b" style="left:114px;top:942px;" width="34" height="24" viewBox="0 0 34 24"><rect x="1.5" y="11" width="7" height="7" fill="none" stroke="#1E1E1E" stroke-width="2"/><rect x="17" y="2" width="13" height="9" fill="none" stroke="#1E1E1E" stroke-width="2"/><rect x="12" y="11" width="11" height="11" fill="#fff" stroke="#1E1E1E" stroke-width="2"/><path d="M8 14 H12 M5 11 V5 H17" fill="none" stroke="#1E1E1E" stroke-width="2"/></svg>
<div class="t" style="left:157px;top:943.3px;font-size:23.5px;line-height:23.5px;color:#1E1E1E;letter-spacing:-0.35px;font-weight:400;">Dependencies</div>
<svg class="b" style="left:70.4px;top:984px;" width="14" height="18" viewBox="0 0 14 18"><path d="M2 1.5 L11.5 9 L2 16.5Z" fill="none" stroke="#1E1E1E" stroke-width="2.2"/></svg>
<svg class="b" style="left:116px;top:979px;" width="30" height="26" viewBox="0 0 30 26"><path d="M1.5 3 H11 L14 6 H28.5 V24.5 H1.5Z" fill="#DCB67A" stroke="#B08526" stroke-width="1.8"/><path d="M1.5 8 H28.5" stroke="#B08526" stroke-width="1.5"/></svg>
<div class="t" style="left:157px;top:981.3px;font-size:23.5px;line-height:23.5px;color:#1E1E1E;letter-spacing:-0.35px;font-weight:400;">ShouldExclude</div>
<svg class="b" style="left:71.5px;top:1024px;" width="14" height="14" viewBox="0 0 14 14"><path d="M13 1 V13 H1Z" fill="#1E1E1E"/></svg>
<svg class="b" style="left:116px;top:1017px;" width="30" height="26" viewBox="0 0 30 26"><path d="M1.5 3 H11 L14 6 H28.5 V24.5 H1.5Z" fill="#DCB67A" stroke="#B08526" stroke-width="1.8"/><path d="M1.5 8 H28.5" stroke="#B08526" stroke-width="1.5"/></svg>
<div class="t" style="left:157px;top:1019.3px;font-size:23.5px;line-height:23.5px;color:#1E1E1E;letter-spacing:-0.35px;font-weight:400;">ShouldInclude</div>
<svg class="b" style="left:153px;top:1053px;" width="28" height="20" viewBox="0 0 28 20"><path d="M4 1.5 H17 L24 8.5 V19 H4Z" fill="#F0F0F0" stroke="#424242" stroke-width="2"/><path d="M17 1.5 V8.5 H24" fill="none" stroke="#424242" stroke-width="1.6"/></svg>
<div class="t" style="left:150.5px;top:1071px;font-size:14px;line-height:14px;color:#C5283D;letter-spacing:-0.3px;font-weight:700;-webkit-text-stroke-width:0">YML</div>
<div class="t" style="left:193px;top:1057.3px;font-size:23.5px;line-height:23.5px;color:#1E1E1E;letter-spacing:-0.35px;font-weight:400;">Included.yml</div>
<svg class="b" style="left:116px;top:1090px;" width="28" height="32" viewBox="0 0 28 32"><path d="M4 1.5 H17 L24 8.5 V30.5 H4Z" fill="#F0F0F0" stroke="#424242" stroke-width="2"/><path d="M17 1.5 V8.5 H24" fill="none" stroke="#424242" stroke-width="1.6"/><path d="M8 12 H20 M8 16 H20 M8 20 H20 M8 24 H20" stroke="#424242" stroke-width="1.6"/></svg>
<div class="t" style="left:157px;top:1095.3px;font-size:23.5px;line-height:23.5px;color:#1E1E1E;letter-spacing:-0.35px;font-weight:400;">ReadMe.txt</div>
<svg class="b" style="left:117px;top:1129px;" width="28" height="20" viewBox="0 0 28 20"><path d="M4 1.5 H17 L24 8.5 V19 H4Z" fill="#F0F0F0" stroke="#424242" stroke-width="2"/><path d="M17 1.5 V8.5 H24" fill="none" stroke="#424242" stroke-width="1.6"/></svg>
<div class="t" style="left:114.5px;top:1147px;font-size:14px;line-height:14px;color:#C5283D;letter-spacing:-0.3px;font-weight:700;-webkit-text-stroke-width:0">YML</div>
<div class="t" style="left:157px;top:1133.3px;font-size:23.5px;line-height:23.5px;color:#1E1E1E;letter-spacing:-0.35px;font-weight:400;">SecretsSuppressedAndDisabled.yml</div>
<svg class="b" style="left:35.5px;top:1176px;" width="14" height="14" viewBox="0 0 14 14"><path d="M13 1 V13 H1Z" fill="#1E1E1E"/></svg>
<svg class="b" style="left:77.5px;top:1166px;" width="34" height="34" viewBox="0 0 34 34"><rect x="7" y="2" width="25" height="25" fill="#F5F5F5" stroke="#424242" stroke-width="2"/><path d="M7 8 H32" stroke="#424242" stroke-width="2"/><circle cx="10" cy="22" r="9" fill="#DDE8F6" stroke="#1F6FC5" stroke-width="2"/><path d="M1 22 H19 M10 13 V31 M3 17 H17 M3 27 H17" stroke="#1F6FC5" stroke-width="1.5"/><ellipse cx="10" cy="22" rx="4" ry="9" fill="none" stroke="#1F6FC5" stroke-width="1.5"/></svg>
<div class="t" style="left:121px;top:1171.3px;font-size:23.5px;line-height:23.5px;color:#1E1E1E;letter-spacing:-0.35px;font-weight:400;">Taint_CSharp_NetCore_WebAppReact</div>
<svg class="b" style="left:70.4px;top:1212px;" width="14" height="18" viewBox="0 0 14 18"><path d="M2 1.5 L11.5 9 L2 16.5Z" fill="none" stroke="#1E1E1E" stroke-width="2.2"/></svg>
<svg class="b" style="left:116px;top:1206px;" width="32" height="30" viewBox="0 0 32 30"><path d="M7 21 C1 21 1 12 7 11 C8 4 18 2 21 8 C27 7 31 13 27 18 C26 20 25 21 23 21" fill="none" stroke="#4D9BD6" stroke-width="2"/><path d="M13 14 V19 H19 V14 M14 19 V24 M18 19 V24 M16 24 V29" fill="none" stroke="#1E8B82" stroke-width="2"/></svg>
<div class="t" style="left:157px;top:1209.3px;font-size:23.5px;line-height:23.5px;color:#1E1E1E;letter-spacing:-0.35px;font-weight:400;">Connected Services</div>
<svg class="b" style="left:114px;top:1246px;" width="34" height="24" viewBox="0 0 34 24"><rect x="1.5" y="11" width="7" height="7" fill="none" stroke="#1E1E1E" stroke-width="2"/><rect x="17" y="2" width="13" height="9" fill="none" stroke="#1E1E1E" stroke-width="2"/><rect x="12" y="11" width="11" height="11" fill="#fff" stroke="#1E1E1E" stroke-width="2"/><path d="M8 14 H12 M5 11 V5 H17" fill="none" stroke="#1E1E1E" stroke-width="2"/></svg>
<div class="t" style="left:157px;top:1247.3px;font-size:23.5px;line-height:23.5px;color:#1E1E1E;letter-spacing:-0.35px;font-weight:400;">Dependencies</div>
<svg class="b" style="left:70.4px;top:1288px;" width="14" height="18" viewBox="0 0 14 18"><path d="M2 1.5 L11.5 9 L2 16.5Z" fill="none" stroke="#1E1E1E" stroke-width="2.2"/></svg>
<svg class="b" style="left:116px;top:1283px;" width="32" height="30" viewBox="0 0 32 30"><path d="M1.5 3 H11 L14 6 H28.5 V24.5 H1.5Z" fill="#DCB67A" stroke="#B08526" stroke-width="1.8"/><path d="M2 28 L12 18" stroke="#1E1E1E" stroke-width="4" stroke-linecap="round"/><path d="M11 19 C8 14 11 8 17 9 L14 12 L16 15 L19 14 L21 12 C21 18 16 20 11 19Z" fill="#1E1E1E"/></svg>
<div class="t" style="left:157px;top:1285.3px;font-size:23.5px;line-height:23.5px;color:#1E1E1E;letter-spacing:-0.35px;font-weight:400;">Properties</div>
<svg class="b" style="left:70.4px;top:1326px;" width="14" height="18" viewBox="0 0 14 18"><path d="M2 1.5 L11.5 9 L2 16.5Z" fill="none" stroke="#1E1E1E" stroke-width="2.2"/></svg>
<svg class="b" style="left:116px;top:1321px;" width="30" height="26" viewBox="0 0 30 26"><path d="M1.5 3 H11 L14 6 H28.5 V24.5 H1.5Z" fill="#DCB67A" stroke="#B08526" stroke-width="1.8"/><path d="M1.5 8 H28.5" stroke="#B08526" stroke-width="1.5"/></svg>
<div class="t" style="left:157px;top:1323.3px;font-size:23.5px;line-height:23.5px;color:#1E1E1E;letter-spacing:-0.35px;font-weight:400;">ClientApp</div>
<svg class="b" style="left:70.4px;top:1364px;" width="14" height="18" viewBox="0 0 14 18"><path d="M2 1.5 L11.5 9 L2 16.5Z" fill="none" stroke="#1E1E1E" stroke-width="2.2"/></svg>
<svg class="b" style="left:116px;top:1359px;" width="30" height="26" viewBox="0 0 30 26"><path d="M1.5 3 H11 L14 6 H28.5 V24.5 H1.5Z" fill="#DCB67A" stroke="#B08526" stroke-width="1.8"/><path d="M1.5 8 H28.5" stroke="#B08526" stroke-width="1.5"/></svg>
<div class="t" style="left:157px;top:1361.3px;font-size:23.5px;line-height:23.5px;color:#1E1E1E;letter-spacing:-0.35px;font-weight:400;">Controllers</div>
<svg class="b" style="left:70.4px;top:1402px;" width="14" height="18" viewBox="0 0 14 18"><path d="M2 1.5 L11.5 9 L2 16.5Z" fill="none" stroke="#1E1E1E" stroke-width="2.2"/></svg>
<svg class="b" style="left:116px;top:1397px;" width="30" height="26" viewBox="0 0 30 26"><path d="M1.5 3 H11 L14 6 H28.5 V24.5 H1.5Z" fill="#DCB67A" stroke="#B08526" stroke-width="1.8"/><path d="M1.5 8 H28.5" stroke="#B08526" stroke-width="1.5"/></svg>
<div class="t" style="left:157px;top:1399.3px;font-size:23.5px;line-height:23.5px;color:#1E1E1E;letter-spacing:-0.35px;font-weight:400;">Pages</div>
<svg class="b" style="left:71.5px;top:1442px;" width="14" height="14" viewBox="0 0 14 14"><path d="M13 1 V13 H1Z" fill="#1E1E1E"/></svg>
<svg class="b" style="left:116px;top:1435px;" width="30" height="26" viewBox="0 0 30 26"><path d="M1.5 3 H11 L14 6 H28.5 V24.5 H1.5Z" fill="#DCB67A" stroke="#B08526" stroke-width="1.8"/><path d="M1.5 8 H28.5" stroke="#B08526" stroke-width="1.5"/></svg>
<div class="t" style="left:157px;top:1437.3px;font-size:23.5px;line-height:23.5px;color:#1E1E1E;letter-spacing:-0.35px;font-weight:400;">Taint</div>
<div class="t" style="left:153px;top:1476px;font-size:20px;line-height:20px;color:#C0652B;font-weight:400;letter-spacing:1px;-webkit-text-stroke-width:0.6px">JS</div>
<div class="t" style="left:193px;top:1475.3px;font-size:23.5px;line-height:23.5px;color:#1E1E1E;letter-spacing:-0.35px;font-weight:400;">JavaScript.js</div>
<svg class="b" style="left:106.4px;top:1516px;" width="14" height="18" viewBox="0 0 14 18"><path d="M2 1.5 L11.5 9 L2 16.5Z" fill="none" stroke="#1E1E1E" stroke-width="2.2"/></svg>
<div class="t" style="left:152px;top:1513px;font-size:21px;line-height:22px;color:#388A34;font-weight:700;letter-spacing:0px;-webkit-text-stroke-width:0">C<span style="font-size:19px;position:relative;top:-1px;margin-left:2px">#</span></div>
<div class="t" style="left:193px;top:1513.3px;font-size:23.5px;line-height:23.5px;color:#1E1E1E;letter-spacing:-0.35px;font-weight:400;">MixedIssuesController.cs</div>
<svg class="b" style="left:106.4px;top:1554px;" width="14" height="18" viewBox="0 0 14 18"><path d="M2 1.5 L11.5 9 L2 16.5Z" fill="none" stroke="#1E1E1E" stroke-width="2.2"/></svg>
<div class="t" style="left:152px;top:1551px;font-size:21px;line-height:22px;color:#388A34;font-weight:700;letter-spacing:0px;-webkit-text-stroke-width:0">C<span style="font-size:19px;position:relative;top:-1px;margin-left:2px">#</span></div>
<div class="t" style="left:193px;top:1551.3px;font-size:23.5px;line-height:23.5px;color:#1E1E1E;letter-spacing:-0.35px;font-weight:400;">MultiFlow_IOPathInjectionController.cs</div>
<svg class="b" style="left:106.4px;top:1592px;" width="14" height="18" viewBox="0 0 14 18"><path d="M2 1.5 L11.5 9 L2 16.5Z" fill="none" stroke="#1E1E1E" stroke-width="2.2"/></svg>
<div class="t" style="left:152px;top:1589px;font-size:21px;line-height:22px;color:#388A34;font-weight:700;letter-spacing:0px;-webkit-text-stroke-width:0">C<span style="font-size:19px;position:relative;top:-1px;margin-left:2px">#</span></div>
<div class="t" style="left:193px;top:1589.3px;font-size:23.5px;line-height:23.5px;color:#1E1E1E;letter-spacing:-0.35px;font-weight:400;">XmlSerializerInjectionController.cs</div>
<svg class="b" style="left:106.4px;top:1630px;" width="14" height="18" viewBox="0 0 14 18"><path d="M2 1.5 L11.5 9 L2 16.5Z" fill="none" stroke="#1E1E1E" stroke-width="2.2"/></svg>
<div class="t" style="left:152px;top:1627px;font-size:21px;line-height:22px;color:#388A34;font-weight:700;letter-spacing:0px;-webkit-text-stroke-width:0">C<span style="font-size:19px;position:relative;top:-1px;margin-left:2px">#</span></div>
<div class="t" style="left:193px;top:1627.3px;font-size:23.5px;line-height:23.5px;color:#1E1E1E;letter-spacing:-0.35px;font-weight:400;">XPathInjectionController.cs</div>
<svg class="b" style="left:116px;top:1660px;" width="28" height="32" viewBox="0 0 28 32"><path d="M4 1.5 H17 L24 8.5 V30.5 H4Z" fill="#F0F0F0" stroke="#424242" stroke-width="2"/><path d="M17 1.5 V8.5 H24" fill="none" stroke="#424242" stroke-width="1.6"/><path d="M8 12 H20 M8 16 H20 M8 20 H20 M8 24 H20" stroke="#424242" stroke-width="1.6"/></svg>
<div class="t" style="left:157px;top:1665.3px;font-size:23.5px;line-height:23.5px;color:#1E1E1E;letter-spacing:-0.35px;font-weight:400;">.gitignore</div>
<svg class="b" style="left:70.4px;top:1706px;" width="14" height="18" viewBox="0 0 14 18"><path d="M2 1.5 L11.5 9 L2 16.5Z" fill="none" stroke="#1E1E1E" stroke-width="2.2"/></svg>
<svg class="b" style="left:116px;top:1698px;" width="28" height="32" viewBox="0 0 28 32"><path d="M4 1.5 H17 L24 8.5 V30.5 H4Z" fill="#F0F0F0" stroke="#424242" stroke-width="2"/><path d="M17 1.5 V8.5 H24" fill="none" stroke="#424242" stroke-width="1.6"/><text x="6" y="24" font-size="13" font-family="Liberation Sans" fill="#424242">{ }</text></svg>
<div class="t" style="left:157px;top:1703.3px;font-size:23.5px;line-height:23.5px;color:#1E1E1E;letter-spacing:-0.35px;font-weight:400;">appsettings.json</div>
<svg class="b" style="left:116px;top:1736px;" width="28" height="32" viewBox="0 0 28 32"><path d="M4 1.5 H17 L24 8.5 V30.5 H4Z" fill="#F0F0F0" stroke="#424242" stroke-width="2"/><path d="M17 1.5 V8.5 H24" fill="none" stroke="#424242" stroke-width="1.6"/><path d="M1 26 L5 22 L9 26 L5 30Z" fill="#fff" stroke="#1E1E1E" stroke-width="2"/></svg>
<div class="t" style="left:157px;top:1741.3px;font-size:23.5px;line-height:23.5px;color:#1E1E1E;letter-spacing:-0.35px;font-weight:400;">junk.targets</div>
<svg class="b" style="left:70.4px;top:1782px;" width="14" height="18" viewBox="0 0 14 18"><path d="M2 1.5 L11.5 9 L2 16.5Z" fill="none" stroke="#1E1E1E" stroke-width="2.2"/></svg>
<div class="t" style="left:116px;top:1779px;font-size:21px;line-height:22px;color:#388A34;font-weight:700;letter-spacing:0px;-webkit-text-stroke-width:0">C<span style="font-size:19px;position:relative;top:-1px;margin-left:2px">#</span></div>
<div class="t" style="left:157px;top:1779.3px;font-size:23.5px;line-height:23.5px;color:#1E1E1E;letter-spacing:-0.35px;font-weight:400;">Program.cs</div>
<svg class="b" style="left:70.4px;top:1820px;" width="14" height="18" viewBox="0 0 14 18"><path d="M2 1.5 L11.5 9 L2 16.5Z" fill="none" stroke="#1E1E1E" stroke-width="2.2"/></svg>
<div class="t" style="left:116px;top:1817px;font-size:21px;line-height:22px;color:#388A34;font-weight:700;letter-spacing:0px;-webkit-text-stroke-width:0">C<span style="font-size:19px;position:relative;top:-1px;margin-left:2px">#</span></div>
<div class="t" style="left:157px;top:1817.3px;font-size:23.5px;line-height:23.5px;color:#1E1E1E;letter-spacing:-0.35px;font-weight:400;">Startup.cs</div>
<svg class="b" style="left:70.4px;top:1858px;" width="14" height="18" viewBox="0 0 14 18"><path d="M2 1.5 L11.5 9 L2 16.5Z" fill="none" stroke="#1E1E1E" stroke-width="2.2"/></svg>
<div class="t" style="left:116px;top:1855px;font-size:21px;line-height:22px;color:#388A34;font-weight:700;letter-spacing:0px;-webkit-text-stroke-width:0">C<span style="font-size:19px;position:relative;top:-1px;margin-left:2px">#</span></div>
<div class="t" style="left:157px;top:1855.3px;font-size:23.5px;line-height:23.5px;color:#1E1E1E;letter-spacing:-0.35px;font-weight:400;">Suppressions_CSharp.cs</div>
<svg class="b" style="left:70.4px;top:1896px;" width="14" height="18" viewBox="0 0 14 18"><path d="M2 1.5 L11.5 9 L2 16.5Z" fill="none" stroke="#1E1E1E" stroke-width="2.2"/></svg>
<div class="t" style="left:116px;top:1893px;font-size:21px;line-height:22px;color:#388A34;font-weight:700;letter-spacing:0px;-webkit-text-stroke-width:0">C<span style="font-size:19px;position:relative;top:-1px;margin-left:2px">#</span></div>
<div class="t" style="left:157px;top:1893.3px;font-size:23.5px;line-height:23.5px;color:#1E1E1E;letter-spacing:-0.35px;font-weight:400;">Suppressions_CSharp_WrongFileNameSoIssuesNotSuppressed.cs</div>
<div class="t" style="left:116px;top:1931px;font-size:21px;line-height:22px;color:#388A34;font-weight:700;letter-spacing:0px;-webkit-text-stroke-width:0">C<span style="font-size:19px;position:relative;top:-1px;margin-left:2px">#</span></div>
<div class="t" style="left:157px;top:1931.3px;font-size:23.5px;line-height:23.5px;color:#1E1E1E;letter-spacing:-0.35px;font-weight:400;">WeatherForecast.cs</div>
<svg class="b" style="left:35.5px;top:1974px;" width="14" height="14" viewBox="0 0 14 14"><path d="M13 1 V13 H1Z" fill="#1E1E1E"/></svg>
<svg class="b" style="left:80.5px;top:1964px;" width="34" height="34" viewBox="0 0 34 34"><rect x="1.5" y="2" width="26" height="25" fill="#F5F5F5" stroke="#424242" stroke-width="2.2"/><path d="M1.5 8 H27.5" stroke="#424242" stroke-width="2.2"/></svg>
<div class="t" style="left:121px;top:1969.3px;font-size:23.5px;line-height:23.5px;color:#1E1E1E;letter-spacing:-0.35px;font-weight:400;">TestProject_CS</div>
</div>
<svg class="b" style="left:931px;top:300px;" width="17" height="11" viewBox="0 0 17 11"><path d="M0 10 L8.5 0 L17 10Z" fill="#868999"/></svg>
<div class="b" style="left:930.4px;top:845px;width:18.0px;height:880.3px;background:#C2C3C9;"></div>
<svg class="b" style="left:931px;top:1953px;" width="17" height="11" viewBox="0 0 17 11"><path d="M0 0 L8.5 10 L17 0Z" fill="#868999"/></svg>
<div class="b" style="left:533px;top:1974.3px;width:202.5px;height:41.700000000000045px;background:#F5F5F5;border:1.5px solid #CCCEDB;box-sizing:border-box;border-top:none;"></div>
<div class="t" style="left:24.5px;top:1984.3px;font-size:23.5px;line-height:23.5px;color:#424242;letter-spacing:-0.35px;font-weight:400;">Sonar Issue Visualization</div>
<div class="t" style="left:305px;top:1984.3px;font-size:23.5px;line-height:23.5px;color:#424242;letter-spacing:-0.35px;font-weight:400;">GitHub Copilot Chat</div>
<div class="t" style="left:544.7px;top:1984.3px;font-size:23.5px;line-height:23.5px;color:#1F6FC5;letter-spacing:-0.35px;font-weight:400;">Solution Explorer</div>
<div class="b" style="left:0px;top:2029px;width:3456px;height:48px;background:#2F6BBD;"></div>
<div class="b" style="left:0px;top:2077px;width:3456px;height:82px;background:#000000;"></div>
<svg class="b" style="left:9px;top:2037px;" width="33" height="33" viewBox="0 0 33 33"><path d="M1.5 2 H29.5 V25 H21 L15.5 30.5 L10 25 H1.5Z" fill="none" stroke="#fff" stroke-width="2.2"/><path d="M6 7.5 H16 M6 13.5 H16 M6 19.5 H16" stroke="#fff" stroke-width="2"/><path d="M19 7 L21 9 L25 5 M19 13 L21 15 L25 11 M19 19 L21 21 L25 17" fill="none" stroke="#fff" stroke-width="1.5"/></svg>
<div class="t" style="left:56.9px;top:2043.3px;font-size:23.5px;line-height:23.5px;color:#FFFFFF;letter-spacing:-0.35px;font-weight:400;">SonarQube for Visual Studio: Analyzing QuickFixes.cpp</div>
<svg class="b" style="left:2644px;top:2038px;" width="30" height="30" viewBox="0 0 30 30"><path d="M8 20 C2 20 2 12 8 11 C9 5 18 4 20 9 C26 8 29 14 26 18 C25 20 24 20 22 20" fill="none" stroke="#fff" stroke-width="2"/><circle cx="15" cy="19" r="4" fill="none" stroke="#fff" stroke-width="1.8"/></svg>
<svg class="b" style="left:2753px;top:2039px;" width="22" height="28" viewBox="0 0 22 28"><path d="M11 27 V3 M2 12 L11 2 L20 12" fill="none" stroke="#fff" stroke-width="2.2"/></svg>
<div class="t" style="left:2793px;top:2043.3px;font-size:23.5px;line-height:23.5px;color:#FFFFFF;letter-spacing:-0.35px;font-weight:400;">Add to Source Control</div>
<svg class="b" style="left:3044px;top:2048px;" width="14" height="9" viewBox="0 0 14 9"><path d="M0 8 L7 0 L14 8Z" fill="#fff"/></svg>
<svg class="b" style="left:3103px;top:2039px;" width="28" height="28" viewBox="0 0 28 28"><path d="M2 3 H26 V25 H2Z M2 9 H26 M9 9 V25 M19 9 V25 M9 17 H19" fill="none" stroke="#fff" stroke-width="2"/></svg>
<div class="t" style="left:3145px;top:2043.3px;font-size:23.5px;line-height:23.5px;color:#FFFFFF;letter-spacing:-0.35px;font-weight:400;">Select Repository</div>
<svg class="b" style="left:3339px;top:2048px;" width="14" height="9" viewBox="0 0 14 9"><path d="M0 8 L7 0 L14 8Z" fill="#fff"/></svg>
<svg class="b" style="left:3390px;top:2036px;" width="36" height="36" viewBox="0 0 36 36"><path d="M7 25 V15 C7 8 11 5 16 5 C21 5 25 8 25 15 V25 L28 28 H4Z M13 30 C14 33 18 33 19 30" fill="none" stroke="#fff" stroke-width="2"/></svg>
<div class="b" style="left:3408px;top:2051px;width:20px;height:20px;border-radius:50%;background:#E51400"></div>
<div class="t" style="left:3413px;top:2052px;font-size:14px;line-height:18px;color:#fff;letter-spacing:0">1</div>
<div class="b" style="left:971.5px;top:143px;width:2327.1px;height:39.400000000000006px;background:#E2E2E4;"></div>
<div class="b" style="left:2838px;top:143px;width:259.5px;height:40px;background:#2F6BBD;"></div>
<div class="b" style="left:971.5px;top:182.4px;width:2419.5px;height:4.099999999999994px;background:#2F6BBD;"></div>
<div class="t" style="left:982px;top:151.8px;font-size:23.5px;line-height:23.5px;color:#1E1E1E;letter-spacing:-0.35px;font-weight:400;">Hotspot1.cpp</div>
<div class="t" style="left:1224px;top:151.8px;font-size:23.5px;line-height:23.5px;color:#1E1E1E;letter-spacing:-0.35px;font-weight:400;">ShouldExclude1.js</div>
<div class="t" style="left:1512px;top:151.8px;font-size:23.5px;line-height:23.5px;color:#1E1E1E;letter-spacing:-0.35px;font-weight:400;">Suppressions2.cpp</div>
<div class="t" style="left:1806.6px;top:151.8px;font-size:23.5px;line-height:23.5px;color:#1E1E1E;letter-spacing:-0.35px;font-weight:400;">Suppressions_CSharp.cs:2</div>
<div class="t" style="left:2174.3px;top:151.8px;font-size:23.5px;line-height:23.5px;color:#1E1E1E;letter-spacing:-0.35px;font-weight:400;">Suppressions_CSharp.cs:1</div>
<div class="t" style="left:2542.6px;top:151.8px;font-size:23.5px;line-height:23.5px;color:#1E1E1E;letter-spacing:-0.35px;font-weight:400;">Suppressions_VB.vb</div>
<div class="t" style="left:3109px;top:151.8px;font-size:23.5px;line-height:23.5px;color:#1E1E1E;letter-spacing:-0.35px;font-weight:400;">query.tsql</div>
<div class="t" style="left:2846px;top:151.8px;font-size:23.5px;line-height:23.5px;color:#FFFFFF;letter-spacing:-0.6px;font-weight:700;">QuickFixes.cpp</div>
<svg class="b" style="left:3031px;top:155px;" width="18" height="18" viewBox="0 0 18 18"><path d="M1 9 H7 M7 3 V15 M7 5 H16 V13 H7 M7 9 H16" fill="none" stroke="#fff" stroke-width="2"/></svg>
<svg class="b" style="left:3068px;top:154px;" width="20" height="20" viewBox="0 0 20 20"><path d="M2 2 L18 18 M18 2 L2 18" stroke="#fff" stroke-width="2.4"/></svg>
<svg class="b" style="left:3335px;top:162px;" width="17" height="9" viewBox="0 0 17 9"><path d="M0 0 H17 L8.5 8Z" fill="#717171"/></svg>
<svg class="b" style="left:3368px;top:152px;" width="22" height="22" viewBox="0 0 22 22"><path fill-rule="evenodd" d="M18.26 9.13 L21.34 9.15 L21.34 12.85 L18.26 12.87 L17.46 14.81 L19.61 17.00 L17.00 19.61 L14.81 17.46 L12.87 18.26 L12.85 21.34 L9.15 21.34 L9.13 18.26 L7.19 17.46 L5.00 19.61 L2.39 17.00 L4.54 14.81 L3.74 12.87 L0.66 12.85 L0.66 9.15 L3.74 9.13 L4.54 7.19 L2.39 5.00 L5.00 2.39 L7.19 4.54 L9.13 3.74 L9.15 0.66 L12.85 0.66 L12.87 3.74 L14.81 4.54 L17.00 2.39 L19.61 5.00 L17.46 7.19Z M14 11 A3 3 0 1 0 8 11 A3 3 0 1 0 14 11Z" fill="#717171"/></svg>
<div class="t" style="left:3434px;top:144px;font-size:23.5px;line-height:23.5px;color:#333333;letter-spacing:0.5px;-webkit-text-stroke-width:0;transform-origin:0 0;transform:rotate(90deg)">Notifications</div>
<div class="b" style="left:3443.5px;top:142px;width:12.5px;height:137px;background:#C9CAD3;"></div>
<div class="b" style="left:969.8px;top:186.5px;width:2.2000000000000455px;height:1194.5px;background:#CCCEDB;"></div>
<div class="b" style="left:971.8px;top:186.5px;width:2419.7px;height:40.5px;background:#FFFFFF;"></div>
<div class="b" style="left:971.8px;top:227px;width:2419.7px;height:3px;background:#CCCEDB;"></div>
<div class="b" style="left:1759.5px;top:186.5px;width:10.0px;height:40.5px;background:#E4E5EB;"></div>
<div class="b" style="left:2556.5px;top:186.5px;width:8.5px;height:40.5px;background:#E4E5EB;"></div>
<div class="b" style="left:3355px;top:186.5px;width:36.5px;height:40.5px;background:#F5F5F5;"></div>
<div class="b" style="left:3351.5px;top:186.5px;width:3.5px;height:40.5px;background:#CCCEDB;"></div>
<svg class="b" style="left:980.5px;top:194.5px;" width="28" height="24" viewBox="0 0 28 24"><rect x="1" y="1" width="26" height="22" fill="#F0F0F0" stroke="#424242" stroke-width="2"/><path d="M7 6 V12 M4 9 H10 M15 12 V18 M12 15 H18" stroke="#A23FC7" stroke-width="1.8"/></svg>
<div class="t" style="left:1015.2px;top:197.8px;font-size:23.5px;line-height:23.5px;color:#1E1E1E;letter-spacing:-0.35px;font-weight:400;">Cpp_OldStyleProject_ConsoleApp</div>
<svg class="b" style="left:1743px;top:206px;" width="13" height="7" viewBox="0 0 13 7"><path d="M0 0 H13 L6.5 6Z" fill="#717171"/></svg>
<div class="t" style="left:1810px;top:197.8px;font-size:23.5px;line-height:23.5px;color:#1E1E1E;letter-spacing:-0.35px;font-weight:400;">(Global Scope)</div>
<svg class="b" style="left:2539px;top:206px;" width="13" height="7" viewBox="0 0 13 7"><path d="M0 0 H13 L6.5 6Z" fill="#717171"/></svg>
<svg class="b" style="left:2573px;top:194px;" width="26" height="26" viewBox="0 0 26 26"><path d="M13 2 L23 7 V19 L13 24 L3 19 V7Z M3 7 L13 12 L23 7 M13 12 V24" fill="#F2ECF8" stroke="#8661C5" stroke-width="2"/></svg>
<div class="t" style="left:2606px;top:197.8px;font-size:23.5px;line-height:23.5px;color:#1E1E1E;letter-spacing:-0.35px;font-weight:400;">QuickFixes()</div>
<svg class="b" style="left:3335px;top:206px;" width="13" height="7" viewBox="0 0 13 7"><path d="M0 0 H13 L6.5 6Z" fill="#717171"/></svg>
<svg class="b" style="left:3360px;top:195px;" width="24" height="26" viewBox="0 0 24 26"><path d="M1 11 H23 M1 15 H23 M12 1 V9 M12 17 V25 M7 6 L12 1 L17 6 M7 20 L12 25 L17 20" fill="none" stroke="#1E1E1E" stroke-width="2"/></svg>
<div class="b" style="left:971.8px;top:230px;width:33.700000000000045px;height:1116px;background:#E6E7E8;"></div>
<div class="b" style="left:1005.5px;top:230px;width:2347.9px;height:1116px;background:#FFFFFF;"></div>
<div class="b" style="left:3353.4px;top:230px;width:38.09999999999991px;height:1116px;background:#F3F3F3;"></div>
<div class="b" style="left:3391.3px;top:186.5px;width:2.0px;height:1194.5px;background:#CCCEDB;"></div>
<svg class="b" style="left:3362px;top:243px;" width="19" height="11" viewBox="0 0 19 11"><path d="M0 10 L9.5 0 L19 10Z" fill="#868999"/></svg>
<div class="b" style="left:3361.6px;top:264px;width:21.200000000000273px;height:446.5px;background:#C2C3C9;"></div>
<div class="b" style="left:3381.5px;top:427px;width:9.5px;height:10.5px;background:#A0A0A0;"></div>
<div class="b" style="left:3353px;top:482px;width:38px;height:4px;background:#0000CD;"></div>
<svg class="b" style="left:3363px;top:1323px;" width="19" height="11" viewBox="0 0 19 11"><path d="M0 0 L9.5 10 L19 0Z" fill="#868999"/></svg>
<div class="b" style="left:1175px;top:1180.8000000000002px;width:2178.4px;height:101.92499999999995px;background:#F4F5F9;"></div>
<div class="b" style="left:1175px;top:772.1px;width:2178.4px;height:31.5px;background:none;border:2px solid #E4E4EA;box-sizing:border-box;"></div>
<div class="b" style="left:0;top:0;width:3456px;height:2159px;clip-path:polygon(971.8px 230px,3353.4px 230px,3353.4px 1346px,971.8px 1346px)">
<div class="code" style="left:983px;width:100px;text-align:right;top:237.6px;color:#6E7681">1</div>
<div class="code" style="left:1179px;top:233.1px"><span style="color:#808080">#include</span><span style="color:#000000"> </span><span style="color:#A31515">&lt;iostream&gt;</span></div>
<div class="code" style="left:983px;width:100px;text-align:right;top:271.6px;color:#6E7681">2</div>
<div class="code" style="left:1179px;top:267.1px"><span style="color:#0000FF">using</span><span style="color:#000000"> </span><span style="color:#0000FF">namespace</span><span style="color:#000000"> std;</span></div>
<div class="code" style="left:983px;width:100px;text-align:right;top:305.6px;color:#6E7681">3</div>
<div class="code" style="left:983px;width:100px;text-align:right;top:339.6px;color:#6E7681">4</div>
<div class="code" style="left:1179px;top:335.1px"><span style="color:#0000FF">class</span><span style="color:#000000"> </span><span style="color:#2B91AF">BaseException</span><span style="color:#000000"> { };</span></div>
<div class="code" style="left:983px;width:100px;text-align:right;top:373.5px;color:#6E7681">5</div>
<div class="code" style="left:1179px;top:369.0px"><span style="color:#0000FF">class</span><span style="color:#000000"> </span><span style="color:#2B91AF">DerivedException</span><span style="color:#000000"> : </span><span style="color:#0000FF">public</span><span style="color:#000000"> </span><span style="color:#2B91AF">BaseException</span><span style="color:#000000"> { };</span></div>
<div class="code" style="left:983px;width:100px;text-align:right;top:407.5px;color:#6E7681">6</div>
<div class="code" style="left:1179px;top:403.0px"><span style="color:#0000FF">class</span><span style="color:#000000"> </span><span style="color:#2B91AF">DerivedException2</span><span style="color:#000000"> : </span><span style="color:#0000FF">public</span><span style="color:#000000"> </span><span style="color:#2B91AF">BaseException</span><span style="color:#000000"> { };</span></div>
<div class="code" style="left:983px;width:100px;text-align:right;top:441.5px;color:#6E7681">7</div>
<div class="code" style="left:983px;width:100px;text-align:right;top:475.5px;color:#6E7681">8</div>
<div class="code" style="left:1179px;top:471.0px"><span style="color:#2A8A2A">/*</span></div>
<div class="code" style="left:983px;width:100px;text-align:right;top:509.4px;color:#6E7681">9</div>
<div class="code" style="left:1179px;top:504.9px"><span style="color:#2A8A2A">* Expected Fixes</span></div>
<div class="code" style="left:983px;width:100px;text-align:right;top:543.4px;color:#6E7681">10</div>
<div class="code" style="left:1179px;top:538.9px"><span style="color:#2A8A2A">* * Replace by a type-alias syntax</span></div>
<div class="code" style="left:983px;width:100px;text-align:right;top:577.4px;color:#6E7681">11</div>
<div class="code" style="left:1179px;top:572.9px"><span style="color:#2A8A2A">*/</span></div>
<div class="code" style="left:983px;width:100px;text-align:right;top:611.4px;color:#6E7681">12</div>
<div class="code" style="left:1179px;top:606.9px"><span style="color:#0000FF">typedef</span><span style="color:#000000"> </span><span style="color:#0000FF">int</span><span style="color:#000000"> </span><span style="color:#2B91AF">x1</span><span style="color:#000000">;</span></div>
<div class="code" style="left:983px;width:100px;text-align:right;top:645.3px;color:#6E7681">13</div>
<div class="code" style="left:1179px;top:640.8px"><span style="color:#0000FF">int</span><span style="color:#000000"> </span><span style="color:#74531F">QuickFixes</span><span style="color:#000000">()</span></div>
<div class="code" style="left:983px;width:100px;text-align:right;top:679.3px;color:#6E7681">14</div>
<div class="code" style="left:1179px;top:674.8px"><span style="color:#000000">{</span></div>
<div class="code" style="left:983px;width:100px;text-align:right;top:713.3px;color:#6E7681">15</div>
<div class="code" style="left:1179px;top:708.8px"><span style="color:#2A8A2A">    /*</span></div>
<div class="code" style="left:983px;width:100px;text-align:right;top:747.3px;color:#6E7681">16</div>
<div class="code" style="left:1179px;top:742.8px"><span style="color:#2A8A2A">    * Expected Fixes</span></div>
<div class="code" style="left:983px;width:100px;text-align:right;top:781.2px;color:#1E1E1E">17</div>
<div class="code" style="left:1179px;top:776.7px"><span style="color:#2A8A2A">    * * Change to pointer-to-const,</span></div>
<div class="code" style="left:983px;width:100px;text-align:right;top:815.2px;color:#6E7681">18</div>
<div class="code" style="left:1179px;top:810.7px"><span style="color:#2A8A2A">    * * Replace by nullptr</span></div>
<div class="code" style="left:983px;width:100px;text-align:right;top:849.2px;color:#6E7681">19</div>
<div class="code" style="left:1179px;top:844.7px"><span style="color:#2A8A2A">    */</span></div>
<div class="code" style="left:983px;width:100px;text-align:right;top:883.2px;color:#6E7681">20</div>
<div class="code" style="left:1179px;top:878.7px"><span style="color:#000000">    </span><span style="color:#0000FF">int</span><span style="color:#000000">* </span><span style="color:#1F377F">a</span><span style="color:#000000"> = </span><span style="color:#8A2BE2">NULL</span><span style="color:#000000">;</span></div>
<div class="code" style="left:983px;width:100px;text-align:right;top:917.1px;color:#6E7681">21</div>
<div class="code" style="left:1179px;top:912.6px"><span style="color:#000000">    cout </span><span style="color:#008080">&lt;&lt;</span><span style="color:#000000"> </span><span style="color:#A31515">&quot;Hello CMake.&quot;</span><span style="color:#000000"> </span><span style="color:#008080">&lt;&lt;</span><span style="color:#000000"> </span><span style="color:#74531F">endl</span><span style="color:#000000">;</span></div>
<div class="code" style="left:983px;width:100px;text-align:right;top:951.1px;color:#6E7681">22</div>
<div class="code" style="left:1179px;top:946.6px"><span style="color:#2A8A2A">    //int a;</span></div>
<div class="code" style="left:983px;width:100px;text-align:right;top:985.1px;color:#6E7681">23</div>
<div class="code" style="left:1179px;top:980.6px"><span style="color:#2A8A2A">// todo 123</span></div>
<div class="code" style="left:983px;width:100px;text-align:right;top:1019.1px;color:#6E7681">24</div>
<div class="code" style="left:983px;width:100px;text-align:right;top:1053.0px;color:#6E7681">25</div>
<div class="code" style="left:1179px;top:1048.5px"><span style="color:#000000">    </span><span style="color:#8F08C4">try</span></div>
<div class="code" style="left:983px;width:100px;text-align:right;top:1087.0px;color:#6E7681">26</div>
<div class="code" style="left:1179px;top:1082.5px"><span style="color:#000000">    {</span></div>
<div class="code" style="left:983px;width:100px;text-align:right;top:1121.0px;color:#6E7681">27</div>
<div class="code" style="left:1179px;top:1116.5px"><span style="color:#2A8A2A">        // ...</span></div>
<div class="code" style="left:983px;width:100px;text-align:right;top:1155.0px;color:#6E7681">28</div>
<div class="code" style="left:1179px;top:1150.5px"><span style="color:#000000">    }</span></div>
<div class="code" style="left:983px;width:100px;text-align:right;top:1188.9px;color:#6E7681">29</div>
<div class="code" style="left:983px;width:100px;text-align:right;top:1222.9px;color:#6E7681">33</div>
<div class="code" style="left:1179px;top:1218.4px"><span style="color:#000000">    </span><span style="color:#8F08C4">catch</span><span style="color:#000000"> (</span><span style="color:#2B91AF">BaseException</span><span style="color:#000000">&amp; </span><span style="color:#1F377F">b</span><span style="color:#000000">)</span></div>
<div class="code" style="left:983px;width:100px;text-align:right;top:1256.9px;color:#6E7681">37</div>
<div class="code" style="left:983px;width:100px;text-align:right;top:1290.9px;color:#6E7681">43</div>
<div class="code" style="left:1179px;top:1286.4px"><span style="color:#000000">    </span><span style="color:#8F08C4">catch</span><span style="color:#000000"> (</span><span style="color:#2B91AF">DerivedException</span><span style="color:#000000">&amp; </span><span style="color:#1F377F">d</span><span style="color:#000000">) </span><span style="color:#2A8A2A">// Noncompliant, the previous handled effectively hides this one</span></div>
<div class="code" style="left:983px;width:100px;text-align:right;top:1324.8px;color:#6E7681">44</div>
<div class="code" style="left:1179px;top:1320.3px"><span style="color:#000000">    {</span></div>
<div class="b" style="left:1238.8px;top:1182.3000000000002px;width:171.20000000000005px;height:33.0px;background:none;border:2px solid #888888;box-sizing:border-box;"></div>
<div class="code" style="left:1239.8px;top:1185.4px;color:#888888"> /* ... */</div>
<div class="b" style="left:1603.6px;top:1216.275px;width:140.79999999999995px;height:33.0px;background:none;border:2px solid #888888;box-sizing:border-box;"></div>
<div class="code" style="left:1604.6px;top:1219.4px;color:#888888"> { ... }</div>
<div class="b" style="left:1238.8px;top:1250.25px;width:171.20000000000005px;height:33.0px;background:none;border:2px solid #888888;box-sizing:border-box;"></div>
<div class="code" style="left:1239.8px;top:1253.4px;color:#888888"> /* ... */</div>
<div class="b" style="left:1710.5px;top:773.6px;width:2.0px;height:29.5px;background:#000000;"></div>
<svg class="b" style="left:1140px;top:479.32500000000005px;" width="18" height="11" viewBox="0 0 18 11"><path d="M1.5 1.5 L9 9 L16.5 1.5" fill="none" stroke="#424242" stroke-width="2.2"/></svg>
<svg class="b" style="left:1140px;top:649.2px;" width="18" height="11" viewBox="0 0 18 11"><path d="M1.5 1.5 L9 9 L16.5 1.5" fill="none" stroke="#424242" stroke-width="2.2"/></svg>
<svg class="b" style="left:1140px;top:717.1500000000001px;" width="18" height="11" viewBox="0 0 18 11"><path d="M1.5 1.5 L9 9 L16.5 1.5" fill="none" stroke="#424242" stroke-width="2.2"/></svg>
<svg class="b" style="left:1140px;top:954.975px;" width="18" height="11" viewBox="0 0 18 11"><path d="M1.5 1.5 L9 9 L16.5 1.5" fill="none" stroke="#424242" stroke-width="2.2"/></svg>
<svg class="b" style="left:1140px;top:1056.9px;" width="18" height="11" viewBox="0 0 18 11"><path d="M1.5 1.5 L9 9 L16.5 1.5" fill="none" stroke="#424242" stroke-width="2.2"/></svg>
<svg class="b" style="left:1140px;top:1294.7250000000001px;" width="18" height="11" viewBox="0 0 18 11"><path d="M1.5 1.5 L9 9 L16.5 1.5" fill="none" stroke="#424242" stroke-width="2.2"/></svg>
<svg class="b" style="left:1144px;top:1188.8000000000002px;" width="11" height="18" viewBox="0 0 11 18"><path d="M1.5 1.5 L9 9 L1.5 16.5" fill="none" stroke="#424242" stroke-width="2.2"/></svg>
<svg class="b" style="left:1144px;top:1222.775px;" width="11" height="18" viewBox="0 0 11 18"><path d="M1.5 1.5 L9 9 L1.5 16.5" fill="none" stroke="#424242" stroke-width="2.2"/></svg>
<svg class="b" style="left:1144px;top:1256.75px;" width="11" height="18" viewBox="0 0 11 18"><path d="M1.5 1.5 L9 9 L1.5 16.5" fill="none" stroke="#424242" stroke-width="2.2"/></svg>
<div class="b" style="left:1148.5px;top:503.3px;width:2.0px;height:101.42500000000001px;background:#8F8F8F;"></div>
<div class="b" style="left:1148.5px;top:602.725px;width:10.0px;height:2.0px;background:#8F8F8F;"></div>
<div class="b" style="left:1148.5px;top:673.175px;width:2.0px;height:33.47500000000002px;background:#8F8F8F;"></div>
<div class="b" style="left:1148.5px;top:741.125px;width:2.0px;height:135.4000000000001px;background:#8F8F8F;"></div>
<div class="b" style="left:1148.5px;top:874.5250000000001px;width:10.0px;height:2.0px;background:#8F8F8F;"></div>
<div class="b" style="left:1148.5px;top:877.025px;width:2.0px;height:67.45000000000005px;background:#8F8F8F;"></div>
<div class="b" style="left:1148.5px;top:978.95px;width:2.0px;height:33.47500000000002px;background:#8F8F8F;"></div>
<div class="b" style="left:1148.5px;top:1010.4250000000001px;width:10.0px;height:2.0px;background:#8F8F8F;"></div>
<div class="b" style="left:1148.5px;top:1012.9250000000001px;width:2.0px;height:33.47500000000002px;background:#8F8F8F;"></div>
<div class="b" style="left:1148.5px;top:1080.875px;width:2.0px;height:101.42499999999995px;background:#8F8F8F;"></div>
<div class="b" style="left:1148.5px;top:1180.3px;width:10.0px;height:2.0px;background:#8F8F8F;"></div>
<div class="b" style="left:1148.5px;top:1318.7px;width:2.0px;height:33.47499999999991px;background:#8F8F8F;"></div>
<div class="b" style="left:1148.5px;top:1177.8000000000002px;width:2.0px;height:8.0px;background:#8F8F8F;"></div>
<div class="b" style="left:1148.5px;top:1211.775px;width:2.0px;height:8.0px;background:#8F8F8F;"></div>
<div class="b" style="left:1148.5px;top:1245.75px;width:2.0px;height:8.0px;background:#8F8F8F;"></div>
<div class="b" style="left:1148.5px;top:1279.7250000000001px;width:2.0px;height:8.0px;background:#8F8F8F;"></div>
<div class="b" style="left:1183.5px;top:705.1500000000001px;width:2px;height:645.5249999999999px;background-image:linear-gradient(#B8B8B8 60%,transparent 60%);background-size:2px 10px"></div>
<div class="b" style="left:1245px;top:1112.85px;width:2px;height:33.97499999999991px;background-image:linear-gradient(#B8B8B8 60%,transparent 60%);background-size:2px 10px"></div>
</div>
<div class="b" style="left:971.8px;top:1346px;width:2419.7px;height:33.5px;background:#F3F3F5;"></div>
<div class="b" style="left:971.8px;top:1379.5px;width:2421.2px;height:2.099999999999909px;background:#CCCEDB;"></div>
<div class="b" style="left:973.5px;top:1346.4px;width:117.79999999999995px;height:32.59999999999991px;background:#FFFFFF;border:1.5px solid #CCCEDB;box-sizing:border-box;"></div>
<div class="t" style="left:979px;top:1352.8px;font-size:23.5px;line-height:23.5px;color:#1E1E1E;letter-spacing:-0.35px;font-weight:400;">100 %</div>
<svg class="b" style="left:1074px;top:1361px;" width="12" height="7" viewBox="0 0 12 7"><path d="M0 0 H12 L6 6Z" fill="#717171"/></svg>
<svg class="b" style="left:1097px;top:1352px;" width="28" height="26" viewBox="0 0 28 26"><path d="M12 24 C4 20 6 10 13 6 C20 2 26 8 24 14 M14 10 C18 10 20 14 18 18 M4 20 L10 14" fill="none" stroke="#8661C5" stroke-width="2.2"/></svg>
<div class="b" style="left:1177px;top:1352px;width:23.5px;height:23.5px;border-radius:50%;background:#388A34"></div>
<svg class="b" style="left:1181px;top:1357px;" width="16" height="14" viewBox="0 0 16 14"><path d="M2 7 L6.5 11 L14 3" fill="none" stroke="#fff" stroke-width="2.4"/></svg>
<div class="t" style="left:1211px;top:1353.8px;font-size:23.5px;line-height:23.5px;color:#1E1E1E;letter-spacing:-0.35px;font-weight:400;">No issues found</div>
<div class="b" style="left:1494px;top:1351px;width:2px;height:25px;background:#CCCEDB;"></div>
<svg class="b" style="left:1522px;top:1351px;" width="30" height="28" viewBox="0 0 30 28"><path d="M2 27 L8 18 L14 22 L9 28Z" fill="#DCB67A" stroke="#B08526" stroke-width="1.5"/><path d="M11 20 L26 4" stroke="#1E1E1E" stroke-width="2.6"/><path d="M4 4 L6 8 M2 10 H7 M18 2 V6" stroke="#1F6FC5" stroke-width="1.6"/></svg>
<svg class="b" style="left:1558px;top:1362px;" width="14" height="8" viewBox="0 0 14 8"><path d="M0 0 H14 L7 8Z" fill="#1E1E1E"/></svg>
<div class="t" style="left:2958px;top:1352.8px;font-size:23.5px;line-height:23.5px;color:#1E1E1E;letter-spacing:-0.35px;font-weight:400;">Ln: 17</div>
<div class="t" style="left:3054px;top:1352.8px;font-size:23.5px;line-height:23.5px;color:#1E1E1E;letter-spacing:-0.35px;font-weight:400;">Ch: 33</div>
<div class="t" style="left:3153.5px;top:1352.8px;font-size:23.5px;line-height:23.5px;color:#1E1E1E;letter-spacing:-0.35px;font-weight:400;">Col: 36</div>
<div class="t" style="left:3261.4px;top:1352.8px;font-size:23.5px;line-height:23.5px;color:#1E1E1E;letter-spacing:-0.35px;font-weight:400;">TABS</div>
<div class="t" style="left:3350.8px;top:1352.8px;font-size:23.5px;line-height:23.5px;color:#1E1E1E;letter-spacing:-0.35px;font-weight:400;">LF</div>
<div class="b" style="left:970px;top:1394.3px;width:2423.2px;height:582.3px;background:#F5F5F5;border:2px solid #CCCEDB;box-sizing:border-box;"></div>
<div class="b" style="left:972.3px;top:1396px;width:2419.2px;height:93px;background:#EEEEF2;"></div>
<div class="t" style="left:981.3px;top:1406.8px;font-size:23.5px;line-height:23.5px;color:#3C3C3C;letter-spacing:-0.35px;font-weight:400;-webkit-text-stroke-width:0.15px;">Error List</div>
<div class="b" style="left:1088px;top:1409.5px;width:2194px;height:12px;background-image:radial-gradient(circle,#7A7A80 0.9px,transparent 1.3px),radial-gradient(circle,#7A7A80 0.9px,transparent 1.3px);background-size:8px 8px,8px 8px;background-position:0 -2px,4px 2px"></div>
<svg class="b" style="left:3296px;top:1412px;" width="15" height="8" viewBox="0 0 15 8"><path d="M0 0 H15 L7.5 8Z" fill="#1E1E1E"/></svg>
<svg class="b" style="left:3329px;top:1406px;" width="15" height="22" viewBox="0 0 15 22"><path d="M3 1.5 H12 M4.5 1.5 V13 M10.5 1.5 V13 M1 13.5 H14 M7.5 13.5 V21" fill="none" stroke="#1E1E1E" stroke-width="2.4"/></svg>
<svg class="b" style="left:3360px;top:1408px;" width="20" height="17" viewBox="0 0 20 17"><path d="M1 1 L19 16 M19 1 L1 16" stroke="#1E1E1E" stroke-width="2.6"/></svg>
<div class="b" style="left:986.4px;top:1445.3px;width:298.6px;height:37.799999999999955px;background:#FFFFFF;border:1.5px solid #CCCEDB;box-sizing:border-box;"></div>
<div class="t" style="left:994px;top:1454.1px;font-size:23.5px;line-height:23.5px;color:#1E1E1E;letter-spacing:-0.35px;font-weight:400;">Entire Solution</div>
<svg class="b" style="left:1264px;top:1462px;" width="12" height="7" viewBox="0 0 12 7"><path d="M0 0 H12 L6 6Z" fill="#717171"/></svg>
<div class="b" style="left:1308px;top:1442px;width:139.5px;height:43px;background:none;border:2px solid #4A90F0;box-sizing:border-box;"></div>
<div class="b" style="left:1464px;top:1442px;width:179px;height:43px;background:none;border:2px solid #4A90F0;box-sizing:border-box;"></div>
<div class="b" style="left:1660px;top:1442px;width:181.5px;height:43px;background:none;border:2px solid #4A90F0;box-sizing:border-box;"></div>
<div class="b" style="left:1452.5px;top:1448px;width:2.0px;height:32px;background:#CCCEDB;"></div>
<div class="b" style="left:1650px;top:1448px;width:2px;height:32px;background:#CCCEDB;"></div>
<div class="b" style="left:1315px;top:1451px;width:25px;height:25px;border-radius:50%;background:#C9252C"></div>
<svg class="b" style="left:1320px;top:1456px;" width="15" height="15" viewBox="0 0 15 15"><path d="M2 2 L13 13 M13 2 L2 13" stroke="#fff" stroke-width="2.2"/></svg>
<div class="t" style="left:1353px;top:1453.8px;font-size:23.5px;line-height:23.5px;color:#1E1E1E;letter-spacing:-0.35px;font-weight:400;">0 Errors</div>
<svg class="b" style="left:1470px;top:1449px;" width="30" height="28" viewBox="0 0 30 28"><path d="M15 2 L29 27 H1Z" fill="#C89A26"/><path d="M15 10 V19 M15 22 V25" stroke="#fff" stroke-width="2.6"/></svg>
<div class="t" style="left:1509px;top:1453.8px;font-size:23.5px;line-height:23.5px;color:#1E1E1E;letter-spacing:-0.35px;font-weight:400;">0 Warnings</div>
<div class="b" style="left:1667px;top:1451px;width:25px;height:25px;border-radius:50%;background:#1F6FC5"></div>
<svg class="b" style="left:1667px;top:1451px;" width="25" height="25" viewBox="0 0 25 25"><path d="M12.5 10 V20 M12.5 5 V8" stroke="#fff" stroke-width="2.8"/></svg>
<div class="t" style="left:1704px;top:1453.8px;font-size:23.5px;line-height:23.5px;color:#1E1E1E;letter-spacing:-0.35px;font-weight:400;">0 Messages</div>
<svg class="b" style="left:1864px;top:1446px;" width="32" height="26" viewBox="0 0 32 26"><circle cx="7" cy="7" r="5" fill="none" stroke="#C4C4C4" stroke-width="2"/><path d="M14 8 H30 M14 14 H30 M20 20 H30" stroke="#C4C4C4" stroke-width="2"/></svg>
<div class="b" style="left:1908px;top:1448px;width:2px;height:32px;background:#CCCEDB;"></div>
<div class="b" style="left:1924px;top:1445.3px;width:298.5px;height:37.799999999999955px;background:#FFFFFF;border:1.5px solid #CCCEDB;box-sizing:border-box;"></div>
<div class="t" style="left:1932px;top:1454.1px;font-size:23.5px;line-height:23.5px;color:#1E1E1E;letter-spacing:-0.35px;font-weight:400;">Build + IntelliSense</div>
<svg class="b" style="left:2202px;top:1462px;" width="12" height="7" viewBox="0 0 12 7"><path d="M0 0 H12 L6 6Z" fill="#717171"/></svg>
<div class="b" style="left:2996.5px;top:1443.9px;width:389.5px;height:39.09999999999991px;background:#FFFFFF;border:1.5px solid #CCCEDB;box-sizing:border-box;"></div>
<div class="t" style="left:3006px;top:1453.8px;font-size:23.5px;line-height:23.5px;color:#6D6D6D;letter-spacing:-0.35px;font-weight:400;">Search Error List</div>
<svg class="b" style="left:3329px;top:1452px;" width="26" height="26" viewBox="0 0 26 26"><circle cx="16" cy="10" r="7" fill="none" stroke="#1E1E1E" stroke-width="2.4"/><path d="M11 15 L2 24" stroke="#1E1E1E" stroke-width="3"/></svg>
<svg class="b" style="left:3363px;top:1462px;" width="12" height="7" viewBox="0 0 12 7"><path d="M0 0 H12 L6 6Z" fill="#717171"/></svg>
<div class="b" style="left:972.3px;top:1489px;width:2419.2px;height:43px;background:#F5F5F5;"></div>
<div class="b" style="left:983px;top:1531.5px;width:2405px;height:1.5px;background:#CCCEDB;"></div>
<div class="b" style="left:1026.8px;top:1492px;width:1.599999999999909px;height:39px;background:#D8D9E0;"></div>
<div class="b" style="left:1079px;top:1492px;width:1.599999999999909px;height:39px;background:#D8D9E0;"></div>
<div class="b" style="left:1444.5px;top:1492px;width:1.599999999999909px;height:39px;background:#D8D9E0;"></div>
<div class="b" style="left:2278.5px;top:1492px;width:1.599999999999909px;height:39px;background:#D8D9E0;"></div>
<div class="b" style="left:2578.5px;top:1492px;width:1.599999999999909px;height:39px;background:#D8D9E0;"></div>
<div class="b" style="left:2878px;top:1492px;width:1.599999999999909px;height:39px;background:#D8D9E0;"></div>
<div class="b" style="left:2949px;top:1492px;width:1.599999999999909px;height:39px;background:#D8D9E0;"></div>
<div class="b" style="left:3198.6px;top:1492px;width:1.599999999999909px;height:39px;background:#D8D9E0;"></div>
<div class="b" style="left:3297.8px;top:1492px;width:1.599999999999909px;height:39px;background:#D8D9E0;"></div>
<div class="b" style="left:3342px;top:1492px;width:1.599999999999909px;height:39px;background:#D8D9E0;"></div>
<div class="b" style="left:3386.5px;top:1492px;width:1.599999999999909px;height:39px;background:#D8D9E0;"></div>
<div class="t" style="left:1087px;top:1502.3px;font-size:23.5px;line-height:23.5px;color:#1E1E1E;letter-spacing:-0.35px;font-weight:400;">Code</div>
<div class="t" style="left:1452.7px;top:1502.3px;font-size:23.5px;line-height:23.5px;color:#1E1E1E;letter-spacing:-0.35px;font-weight:400;">Description</div>
<div class="t" style="left:2285.7px;top:1502.3px;font-size:23.5px;line-height:23.5px;color:#1E1E1E;letter-spacing:-0.35px;font-weight:400;">Project</div>
<div class="t" style="left:2586px;top:1502.3px;font-size:23.5px;line-height:23.5px;color:#1E1E1E;letter-spacing:-0.35px;font-weight:400;">File</div>
<div class="t" style="left:2887px;top:1502.3px;font-size:23.5px;line-height:23.5px;color:#1E1E1E;letter-spacing:-0.35px;font-weight:400;">..</div>
<svg class="b" style="left:2914px;top:1504px;" width="17" height="9" viewBox="0 0 17 9"><path d="M0 8 L8.5 0 L17 8Z" fill="#1E1E1E"/></svg>
<div class="t" style="left:2956px;top:1502.3px;font-size:23.5px;line-height:23.5px;color:#1E1E1E;letter-spacing:-0.35px;font-weight:400;">Suppression State</div>
<div class="t" style="left:3205.8px;top:1502.3px;font-size:23.5px;line-height:23.5px;color:#1E1E1E;letter-spacing:-0.35px;font-weight:400;">Details</div>
<div class="b" style="left:1718.8px;top:1974.8px;width:114.20000000000005px;height:41.200000000000045px;background:#F5F5F5;border:1.5px solid #CCCEDB;box-sizing:border-box;border-top:none;"></div>
<div class="t" style="left:982.7px;top:1984.3px;font-size:23.5px;line-height:23.5px;color:#424242;letter-spacing:-0.35px;font-weight:400;">SonarQube Local Security Hotspots</div>
<div class="t" style="left:1377.5px;top:1984.3px;font-size:23.5px;line-height:23.5px;color:#424242;letter-spacing:-0.35px;font-weight:400;">SonarQube Taint Vulnerabilities</div>
<div class="t" style="left:1730px;top:1984.3px;font-size:23.5px;line-height:23.5px;color:#1F6FC5;letter-spacing:-0.35px;font-weight:400;">Error List</div>
<div class="t" style="left:1846.6px;top:1984.3px;font-size:23.5px;line-height:23.5px;color:#424242;letter-spacing:-0.35px;font-weight:400;">Output</div>
<div class="b" style="left:1140.3px;top:1323.2px;width:372.70000000000005px;height:74.79999999999995px;border:6px solid #D4141E;border-radius:24px;box-sizing:border-box"></div>
<div class="b" style="left:1295px;top:1426px;width:561.5px;height:73px;border:6px solid #D4141E;border-radius:24px;box-sizing:border-box"></div>
<div class="b" style="left:3px;top:2011px;width:654px;height:75.69999999999982px;border:6px solid #D4141E;border-radius:24px;box-sizing:border-box"></div>
</body></html>
